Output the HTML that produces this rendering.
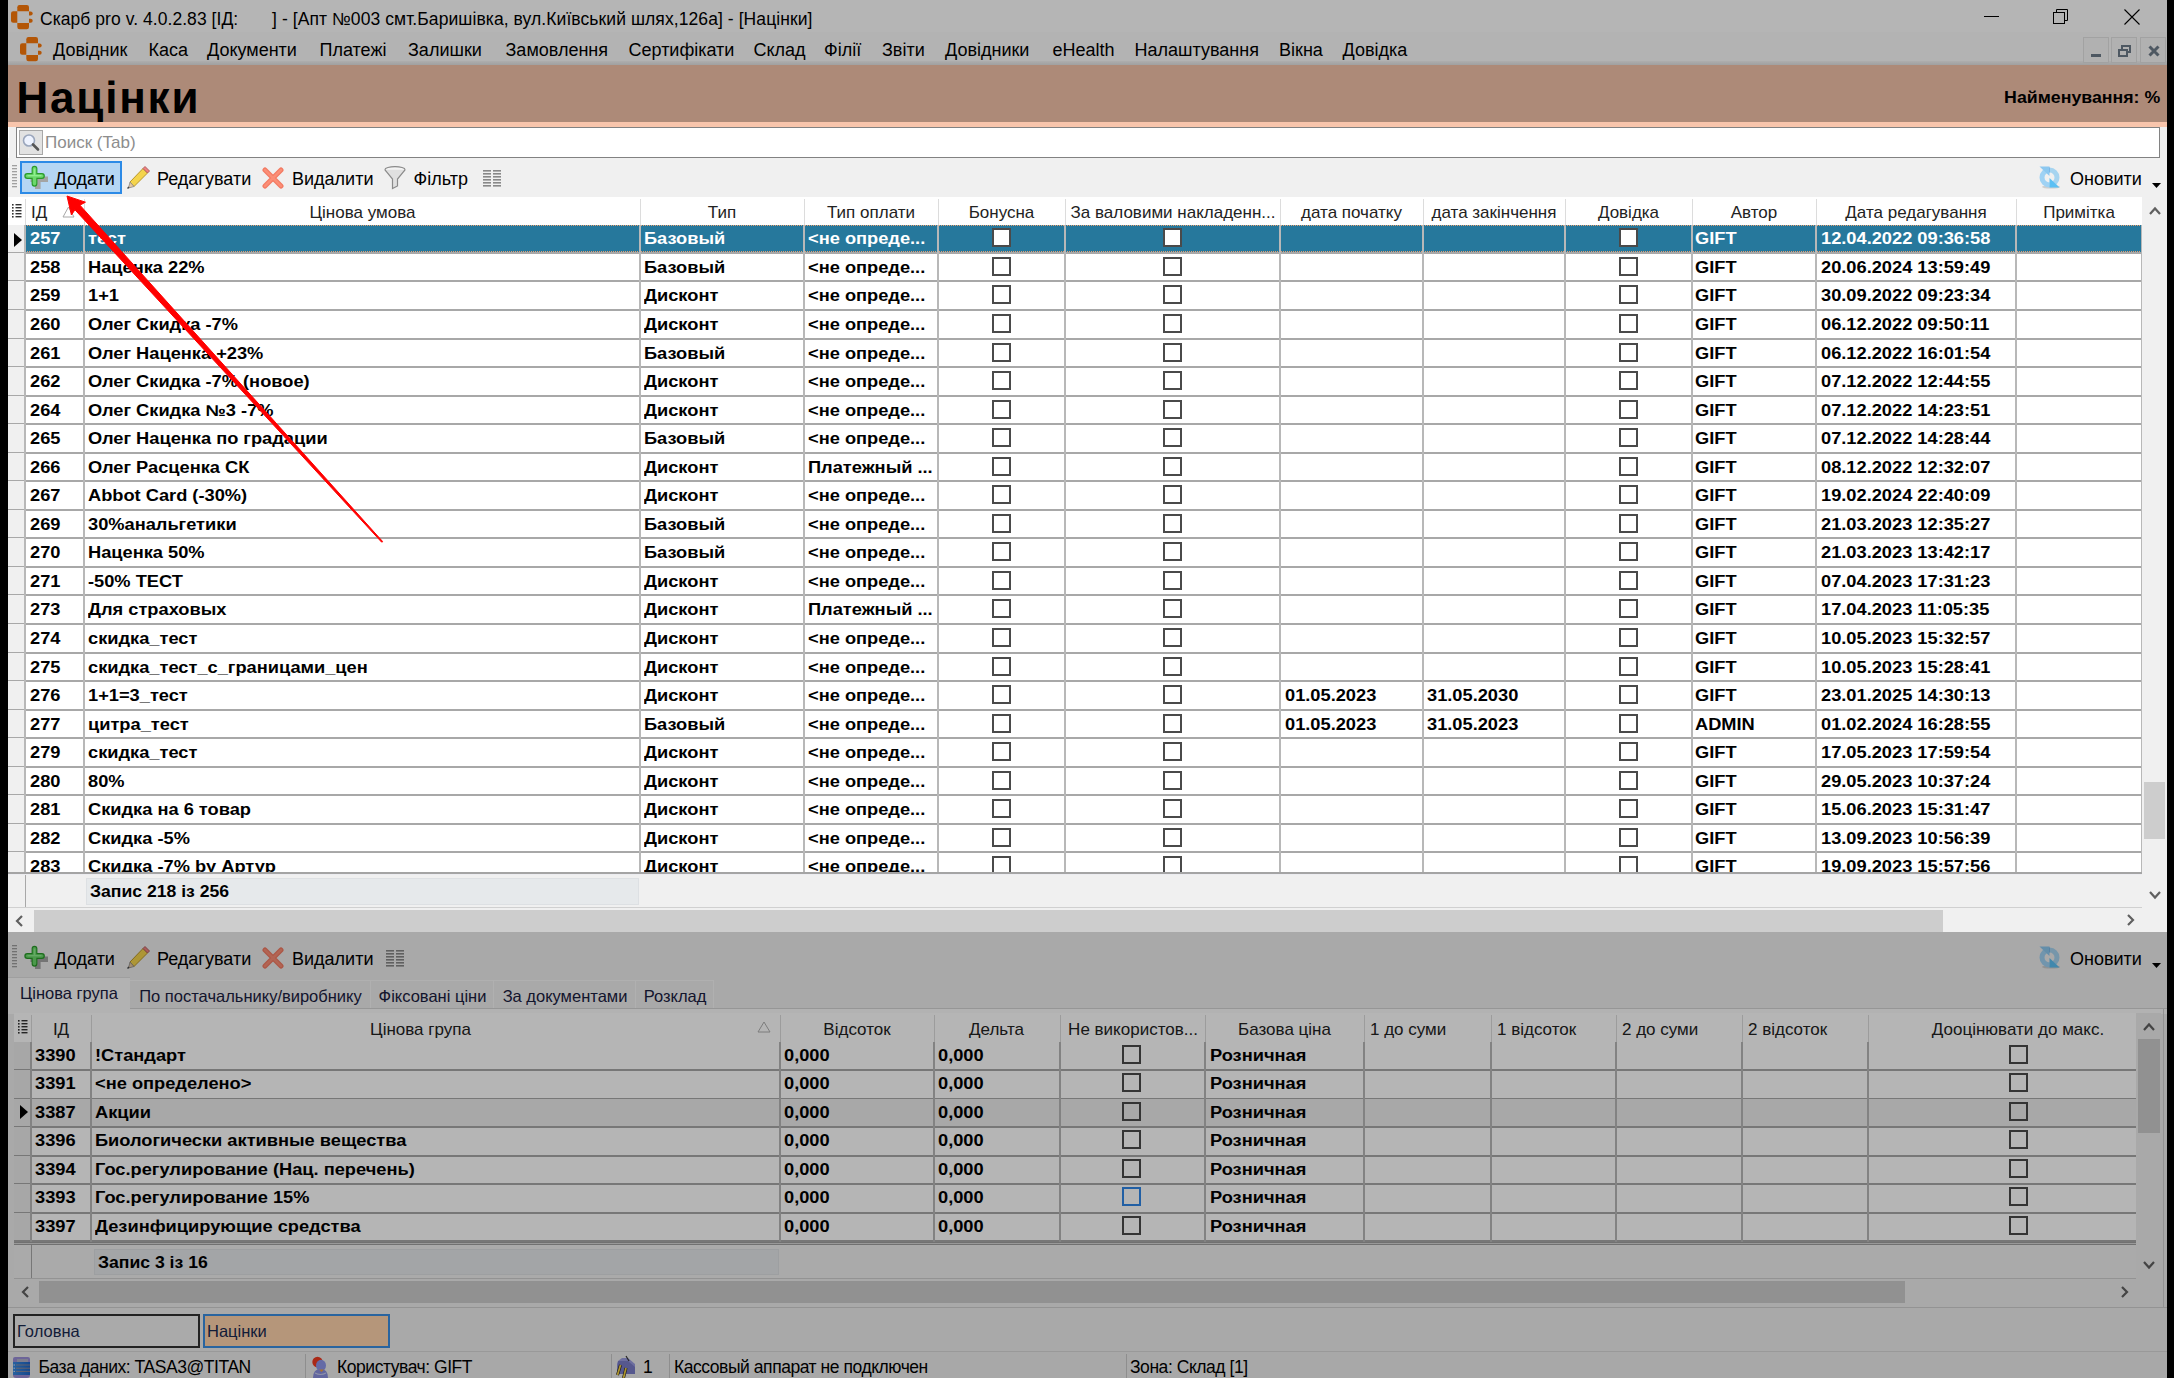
<!DOCTYPE html>
<html><head><meta charset="utf-8"><style>
html,body{margin:0;padding:0;width:2174px;height:1378px;overflow:hidden;background:#000}
body{position:relative;font-family:"Liberation Sans", sans-serif;}
div,svg{font-family:"Liberation Sans", sans-serif;}
</style></head><body>
<div style="position:absolute;left:0px;top:0px;width:2174px;height:1378px;background:#000"></div><div style="position:absolute;left:8px;top:0px;width:2159px;height:1378px;background:#f0f0f0"></div><div style="position:absolute;left:8px;top:0px;width:2159px;height:32px;background:#ffffff"></div><div style="position:absolute;left:8px;top:32px;width:2159px;height:33px;background:#fdfdfd"></div><div style="position:absolute;left:8px;top:61px;width:2159px;height:4px;background:linear-gradient(#f4f4f4,#e2e2e2)"></div><svg style="position:absolute;left:11px;top:5px;" width="22" height="25" viewBox="0 0 22 25"><path d="M6.3 6.2V2.2Q6.3 0 8.5 0H15.8Q18 0 18 2.2V6.2Z" fill="#fd7a0a"/><path d="M6.3 6.2H2.2Q0 6.2 0 8.4V15.5Q0 17.8 2.2 17.8H6.3Z" fill="#fd7a0a"/><path d="M6.3 18V22Q6.3 24.2 8.5 24.2H15.8Q18 24.2 18 22V18Z" fill="#fd7a0a"/><path d="M18 6.4H19.6Q21.7 6.4 21.7 8.5Q21.7 10.5 19.6 10.5H18Z" fill="#fd7a0a"/><path d="M18 13.8H19.6Q21.7 13.8 21.7 15.8Q21.7 17.8 19.6 17.8H18Z" fill="#fd7a0a"/></svg><div style="position:absolute;left:40px;top:10.5px;height:17.5px;line-height:17.5px;font-size:17.5px;font-weight:400;color:#000;letter-spacing:0.05px;text-align:left;white-space:pre;">Скарб pro v. 4.0.2.83 [ІД:</div><div style="position:absolute;left:272px;top:10.5px;height:17.5px;line-height:17.5px;font-size:17.5px;font-weight:400;color:#000;letter-spacing:0.08px;text-align:left;white-space:pre;">] - [Апт №003 смт.Баришівка, вул.Київський шлях,126а] - [Націнки]</div><div style="position:absolute;left:1984px;top:16px;width:15px;height:1px;background:#000"></div><svg style="position:absolute;left:2053px;top:9px;" width="16" height="16" viewBox="0 0 16 16"><rect x="0.5" y="3.5" width="11" height="11" fill="none" stroke="#000"/><path d="M3.5 3.5V0.5H14.5V11.5H11.5" fill="none" stroke="#000"/></svg><svg style="position:absolute;left:2124px;top:9px;" width="16" height="16" viewBox="0 0 16 16"><path d="M0.5 0.5L15.5 15.5M15.5 0.5L0.5 15.5" stroke="#000" stroke-width="1.1"/></svg><svg style="position:absolute;left:19.5px;top:36.5px;" width="22" height="25" viewBox="0 0 22 25"><path d="M6.3 6.2V2.2Q6.3 0 8.5 0H15.8Q18 0 18 2.2V6.2Z" fill="#fd7a0a"/><path d="M6.3 6.2H2.2Q0 6.2 0 8.4V15.5Q0 17.8 2.2 17.8H6.3Z" fill="#fd7a0a"/><path d="M6.3 18V22Q6.3 24.2 8.5 24.2H15.8Q18 24.2 18 22V18Z" fill="#fd7a0a"/><path d="M18 6.4H19.6Q21.7 6.4 21.7 8.5Q21.7 10.5 19.6 10.5H18Z" fill="#fd7a0a"/><path d="M18 13.8H19.6Q21.7 13.8 21.7 15.8Q21.7 17.8 19.6 17.8H18Z" fill="#fd7a0a"/></svg><div style="position:absolute;left:53px;top:41px;height:18px;line-height:18px;font-size:18px;font-weight:400;color:#000;letter-spacing:0px;text-align:left;white-space:pre;">Довідник</div><div style="position:absolute;left:148.5px;top:41px;height:18px;line-height:18px;font-size:18px;font-weight:400;color:#000;letter-spacing:0px;text-align:left;white-space:pre;">Каса</div><div style="position:absolute;left:207px;top:41px;height:18px;line-height:18px;font-size:18px;font-weight:400;color:#000;letter-spacing:0px;text-align:left;white-space:pre;">Документи</div><div style="position:absolute;left:319.5px;top:41px;height:18px;line-height:18px;font-size:18px;font-weight:400;color:#000;letter-spacing:0px;text-align:left;white-space:pre;">Платежі</div><div style="position:absolute;left:408px;top:41px;height:18px;line-height:18px;font-size:18px;font-weight:400;color:#000;letter-spacing:0px;text-align:left;white-space:pre;">Залишки</div><div style="position:absolute;left:505.5px;top:41px;height:18px;line-height:18px;font-size:18px;font-weight:400;color:#000;letter-spacing:0px;text-align:left;white-space:pre;">Замовлення</div><div style="position:absolute;left:628.5px;top:41px;height:18px;line-height:18px;font-size:18px;font-weight:400;color:#000;letter-spacing:0px;text-align:left;white-space:pre;">Сертифікати</div><div style="position:absolute;left:753.5px;top:41px;height:18px;line-height:18px;font-size:18px;font-weight:400;color:#000;letter-spacing:0px;text-align:left;white-space:pre;">Склад</div><div style="position:absolute;left:824px;top:41px;height:18px;line-height:18px;font-size:18px;font-weight:400;color:#000;letter-spacing:0px;text-align:left;white-space:pre;">Філії</div><div style="position:absolute;left:882px;top:41px;height:18px;line-height:18px;font-size:18px;font-weight:400;color:#000;letter-spacing:0px;text-align:left;white-space:pre;">Звіти</div><div style="position:absolute;left:945px;top:41px;height:18px;line-height:18px;font-size:18px;font-weight:400;color:#000;letter-spacing:0px;text-align:left;white-space:pre;">Довідники</div><div style="position:absolute;left:1052.5px;top:41px;height:18px;line-height:18px;font-size:18px;font-weight:400;color:#000;letter-spacing:0px;text-align:left;white-space:pre;">eHealth</div><div style="position:absolute;left:1134.5px;top:41px;height:18px;line-height:18px;font-size:18px;font-weight:400;color:#000;letter-spacing:0px;text-align:left;white-space:pre;">Налаштування</div><div style="position:absolute;left:1279px;top:41px;height:18px;line-height:18px;font-size:18px;font-weight:400;color:#000;letter-spacing:0px;text-align:left;white-space:pre;">Вікна</div><div style="position:absolute;left:1342.5px;top:41px;height:18px;line-height:18px;font-size:18px;font-weight:400;color:#000;letter-spacing:0px;text-align:left;white-space:pre;">Довідка</div><div style="position:absolute;left:2083px;top:37px;width:26px;height:26px;box-sizing:border-box;border:1px solid #e4e4e4;background:#fafafa"></div><div style="position:absolute;left:2111px;top:37px;width:26px;height:26px;box-sizing:border-box;border:1px solid #e4e4e4;background:#fafafa"></div><div style="position:absolute;left:2140px;top:37px;width:26px;height:26px;box-sizing:border-box;border:1px solid #e4e4e4;background:#fafafa"></div><div style="position:absolute;left:2091px;top:54px;width:10px;height:3px;background:#6e7c8a"></div><svg style="position:absolute;left:2118px;top:44px;" width="14" height="14" viewBox="0 0 14 14"><rect x="1" y="6" width="8" height="6" fill="none" stroke="#6e7c8a" stroke-width="2"/><path d="M4 5V2H12V8H10" fill="none" stroke="#6e7c8a" stroke-width="2"/></svg><svg style="position:absolute;left:2148px;top:45px;" width="12" height="12" viewBox="0 0 12 12"><path d="M1.5 1.5L10.5 10.5M10.5 1.5L1.5 10.5" stroke="#6e7c8a" stroke-width="3"/></svg><div style="position:absolute;left:8px;top:65px;width:2159px;height:57px;background:#f4c3aa"></div><div style="position:absolute;left:8px;top:122px;width:2159px;height:5px;background:#f8c5ac"></div><div style="position:absolute;left:16.5px;top:75.5px;height:44px;line-height:44px;font-size:44px;font-weight:700;color:#000;letter-spacing:1.8px;text-align:left;white-space:pre;">Націнки</div><div style="position:absolute;left:1800px;top:89px;width:360px;height:16.5px;line-height:16.5px;font-size:16.5px;font-weight:700;color:#000;letter-spacing:0px;text-align:right;white-space:pre;"><span style="display:inline-block;transform:scaleX(1.075);transform-origin:right">Найменування: %</span></div><div style="position:absolute;left:8px;top:127px;width:2159px;height:31px;background:#f0f0f0"></div><div style="position:absolute;left:8px;top:127px;width:1px;height:805px;background:#ffffff"></div><div style="position:absolute;left:16px;top:127px;width:2144px;height:31px;box-sizing:border-box;border:1px solid #828282;background:#fff"></div><div style="position:absolute;left:19px;top:130px;width:24px;height:25px;box-sizing:border-box;border:1px solid #a8a8a8;background:#e2e2e2"></div><svg style="position:absolute;left:21px;top:133px;" width="20" height="20" viewBox="0 0 20 20"><circle cx="8" cy="7.5" r="5.5" fill="#eef3ff" stroke="#9aa6bc" stroke-width="1.6"/><path d="M12 11.5L17 16.5" stroke="#555" stroke-width="2.6" stroke-linecap="round"/></svg><div style="position:absolute;left:45px;top:134px;height:17px;line-height:17px;font-size:17px;font-weight:400;color:#8d8d8d;letter-spacing:0px;text-align:left;white-space:pre;">Поиск (Tab)</div><div style="position:absolute;left:8px;top:158px;width:2159px;height:39px;background:#f0f0f0"></div><svg style="position:absolute;left:12px;top:165px;" width="5" height="24" viewBox="0 0 5 24"><rect x="0" y="0" width="5" height="1.3" fill="#a0a0a0"/><rect x="0" y="3" width="5" height="1.3" fill="#a0a0a0"/><rect x="0" y="6" width="5" height="1.3" fill="#a0a0a0"/><rect x="0" y="9" width="5" height="1.3" fill="#a0a0a0"/><rect x="0" y="12" width="5" height="1.3" fill="#a0a0a0"/><rect x="0" y="15" width="5" height="1.3" fill="#a0a0a0"/><rect x="0" y="18" width="5" height="1.3" fill="#a0a0a0"/><rect x="0" y="21" width="5" height="1.3" fill="#a0a0a0"/></svg><div style="position:absolute;left:20px;top:161px;width:102px;height:33px;box-sizing:border-box;border:2px solid #2c8ae6;background:#b5d6f4"></div><svg style="position:absolute;left:24px;top:165px;" width="26" height="26" viewBox="0 0 26 26"><path d="M13.8 8V24M6.5 14.3H24" stroke="#a4a4a4" stroke-width="5.6"/><path d="M10.5 3.6V18.8M3.2 11H18" stroke="#2a9a2a" stroke-width="5.8" stroke-linecap="round"/><path d="M10.5 3.8V18.6M3.4 11H17.8" stroke="#6cd86c" stroke-width="3.6" stroke-linecap="round"/><path d="M10.5 4.2V10M4 10.6H17" stroke="#8ef08e" stroke-width="1.4" stroke-linecap="round"/></svg><div style="position:absolute;left:54.5px;top:169.5px;height:18px;line-height:18px;font-size:18px;font-weight:400;color:#000;letter-spacing:0px;text-align:left;white-space:pre;">Додати</div><svg style="position:absolute;left:126px;top:165px;" width="25" height="25" viewBox="0 0 25 25"><path d="M4 17L17 3.5l4.5 4.5L8 21.5z" fill="#f4d44c" stroke="#b9962a" stroke-width="1"/><path d="M17 3.5l2-2 4.5 4.5-2 2z" fill="#f08080" stroke="#b06060" stroke-width="1"/><path d="M4 17l4 4.5-5.5 1.5z" fill="#e8c8a0" stroke="#888" stroke-width="0.8"/><path d="M1.5 23.5l1.5-1.5" stroke="#444" stroke-width="1.5"/></svg><div style="position:absolute;left:157px;top:169.5px;height:18px;line-height:18px;font-size:18px;font-weight:400;color:#000;letter-spacing:0px;text-align:left;white-space:pre;">Редагувати</div><svg style="position:absolute;left:262px;top:167px;" width="22" height="22" viewBox="0 0 22 22"><path d="M3 3L19 19M19 3L3 19" stroke="#f27a62" stroke-width="5" stroke-linecap="round"/><path d="M3 3L19 19M19 3L3 19" stroke="#fb8e76" stroke-width="2.5" stroke-linecap="round"/></svg><div style="position:absolute;left:292px;top:169.5px;height:18px;line-height:18px;font-size:18px;font-weight:400;color:#000;letter-spacing:0px;text-align:left;white-space:pre;">Видалити</div><svg style="position:absolute;left:384px;top:166px;" width="22" height="24" viewBox="0 0 22 24"><ellipse cx="11" cy="3.5" rx="10" ry="2.8" fill="#f4f4f4" stroke="#8a8a8a" stroke-width="1.2"/><path d="M1 3.8L8.5 13V22.5L13.5 20V13L21 3.8" fill="#e0e0e0" stroke="#8a8a8a" stroke-width="1.2"/></svg><div style="position:absolute;left:413.5px;top:169.5px;height:18px;line-height:18px;font-size:18px;font-weight:400;color:#000;letter-spacing:0px;text-align:left;white-space:pre;">Фільтр</div><svg style="position:absolute;left:483px;top:170px;" width="18" height="18" viewBox="0 0 18 18"><rect x="0" y="0" width="8" height="1.6" fill="#888"/><rect x="0" y="3" width="8" height="1.6" fill="#888"/><rect x="0" y="6" width="8" height="1.6" fill="#888"/><rect x="0" y="9" width="8" height="1.6" fill="#888"/><rect x="0" y="12" width="8" height="1.6" fill="#888"/><rect x="0" y="15" width="8" height="1.6" fill="#888"/><rect x="10" y="0" width="8" height="1.6" fill="#888"/><rect x="10" y="3" width="8" height="1.6" fill="#888"/><rect x="10" y="6" width="8" height="1.6" fill="#888"/><rect x="10" y="9" width="8" height="1.6" fill="#888"/><rect x="10" y="12" width="8" height="1.6" fill="#888"/><rect x="10" y="15" width="8" height="1.6" fill="#888"/></svg><svg style="position:absolute;left:2039px;top:166px;" width="23" height="23" viewBox="0 0 23 23"><ellipse cx="12" cy="21" rx="9" ry="1.6" fill="#b8b8b8" opacity="0.6"/><path d="M10.5 1.5A10 10 0 0 0 10.5 21.5V16.5A5 5 0 0 1 10.5 6.5Z" fill="#9fd2f4"/><path d="M0.5 0.5H10.5V10Z" fill="#8cc8f0"/><path d="M10.5 1.5A10 10 0 0 1 10.5 21.5V16.5A5 5 0 0 0 10.5 6.5Z" fill="#a6d4f0"/><path d="M10.5 12V21.5H20.5Z" fill="#5cc0f4"/><path d="M10.5 1.5V6.5" stroke="#7ab8e8" stroke-width="1"/></svg><div style="position:absolute;left:2070px;top:169.5px;height:18px;line-height:18px;font-size:18px;font-weight:400;color:#000;letter-spacing:0px;text-align:left;white-space:pre;">Оновити</div><svg style="position:absolute;left:2152px;top:183px;" width="9" height="6" viewBox="0 0 9 6"><path d="M0 0H9L4.5 5z" fill="#000"/></svg><div style="position:absolute;left:8px;top:197px;width:2134px;height:28px;background:#fff"></div><div style="position:absolute;left:25px;top:199px;width:1px;height:26px;background:#dcdcdc"></div><div style="position:absolute;left:84px;top:199px;width:1px;height:26px;background:#dcdcdc"></div><div style="position:absolute;left:640px;top:199px;width:1px;height:26px;background:#dcdcdc"></div><div style="position:absolute;left:804px;top:199px;width:1px;height:26px;background:#dcdcdc"></div><div style="position:absolute;left:938px;top:199px;width:1px;height:26px;background:#dcdcdc"></div><div style="position:absolute;left:1065px;top:199px;width:1px;height:26px;background:#dcdcdc"></div><div style="position:absolute;left:1280px;top:199px;width:1px;height:26px;background:#dcdcdc"></div><div style="position:absolute;left:1423px;top:199px;width:1px;height:26px;background:#dcdcdc"></div><div style="position:absolute;left:1565px;top:199px;width:1px;height:26px;background:#dcdcdc"></div><div style="position:absolute;left:1692px;top:199px;width:1px;height:26px;background:#dcdcdc"></div><div style="position:absolute;left:1816px;top:199px;width:1px;height:26px;background:#dcdcdc"></div><div style="position:absolute;left:2016px;top:199px;width:1px;height:26px;background:#dcdcdc"></div><svg style="position:absolute;left:12px;top:204px;" width="10" height="15" viewBox="0 0 10 15"><rect x="0" y="0" width="1.6" height="1.6" fill="#333"/><rect x="3.5" y="0" width="6" height="1.4" fill="#333"/><rect x="0" y="3" width="1.6" height="1.6" fill="#333"/><rect x="3.5" y="3" width="6" height="1.4" fill="#333"/><rect x="0" y="6" width="1.6" height="1.6" fill="#333"/><rect x="3.5" y="6" width="6" height="1.4" fill="#333"/><rect x="0" y="9" width="1.6" height="1.6" fill="#333"/><rect x="3.5" y="9" width="6" height="1.4" fill="#333"/><rect x="0" y="12" width="1.6" height="1.6" fill="#333"/><rect x="3.5" y="12" width="6" height="1.4" fill="#333"/></svg><div style="position:absolute;left:31px;top:204px;height:17px;line-height:17px;font-size:17px;font-weight:400;color:#222;letter-spacing:0px;text-align:left;white-space:pre;">ІД</div><svg style="position:absolute;left:62px;top:206px;" width="13" height="12" viewBox="0 0 13 12"><path d="M6.5 1L12 11H1z" fill="#fff" stroke="#a8a8a8" stroke-width="1"/></svg><div style="position:absolute;left:84px;top:204px;width:557px;height:17px;line-height:17px;font-size:17px;font-weight:400;color:#222;letter-spacing:0px;text-align:center;white-space:pre;">Цінова умова</div><div style="position:absolute;left:640px;top:204px;width:164px;height:17px;line-height:17px;font-size:17px;font-weight:400;color:#222;letter-spacing:0px;text-align:center;white-space:pre;">Тип</div><div style="position:absolute;left:804px;top:204px;width:134px;height:17px;line-height:17px;font-size:17px;font-weight:400;color:#222;letter-spacing:0px;text-align:center;white-space:pre;">Тип оплати</div><div style="position:absolute;left:938px;top:204px;width:127px;height:17px;line-height:17px;font-size:17px;font-weight:400;color:#222;letter-spacing:0px;text-align:center;white-space:pre;">Бонусна</div><div style="position:absolute;left:1065px;top:204px;width:216px;height:17px;line-height:17px;font-size:17px;font-weight:400;color:#222;letter-spacing:0px;text-align:center;white-space:pre;">За валовими накладенн...</div><div style="position:absolute;left:1280px;top:204px;width:143px;height:17px;line-height:17px;font-size:17px;font-weight:400;color:#222;letter-spacing:0px;text-align:center;white-space:pre;">дата початку</div><div style="position:absolute;left:1423px;top:204px;width:142px;height:17px;line-height:17px;font-size:17px;font-weight:400;color:#222;letter-spacing:0px;text-align:center;white-space:pre;">дата закінчення</div><div style="position:absolute;left:1565px;top:204px;width:127px;height:17px;line-height:17px;font-size:17px;font-weight:400;color:#222;letter-spacing:0px;text-align:center;white-space:pre;">Довідка</div><div style="position:absolute;left:1692px;top:204px;width:124px;height:17px;line-height:17px;font-size:17px;font-weight:400;color:#222;letter-spacing:0px;text-align:center;white-space:pre;">Автор</div><div style="position:absolute;left:1816px;top:204px;width:200px;height:17px;line-height:17px;font-size:17px;font-weight:400;color:#222;letter-spacing:0px;text-align:center;white-space:pre;">Дата редагування</div><div style="position:absolute;left:2016px;top:204px;width:126px;height:17px;line-height:17px;font-size:17px;font-weight:400;color:#222;letter-spacing:0px;text-align:center;white-space:pre;">Примітка</div><div style="position:absolute;left:8px;top:225px;width:2134px;height:648px;overflow:hidden;background:#fff"><div style="position:absolute;left:0px;top:0px;width:16px;height:27px;background:#f0f0f0"></div><div style="position:absolute;left:17px;top:0px;width:2117px;height:27px;background:#26789c;box-sizing:border-box;border:1.5px dotted #e8a070"></div><div style="position:absolute;left:0px;top:27px;width:2134px;height:1.5px;background:#a8a8a8"></div><div style="position:absolute;left:22px;top:6px;height:16px;line-height:16px;font-size:16px;font-weight:700;color:#fff;letter-spacing:0px;text-align:left;white-space:pre;"><span style="display:inline-block;transform:scaleX(1.14);transform-origin:left">257</span></div><div style="position:absolute;left:80px;top:6px;height:16px;line-height:16px;font-size:16px;font-weight:700;color:#fff;letter-spacing:0px;text-align:left;white-space:pre;"><span style="display:inline-block;transform:scaleX(1.14);transform-origin:left">тест</span></div><div style="position:absolute;left:636px;top:6px;height:16px;line-height:16px;font-size:16px;font-weight:700;color:#fff;letter-spacing:0px;text-align:left;white-space:pre;"><span style="display:inline-block;transform:scaleX(1.14);transform-origin:left">Базовый</span></div><div style="position:absolute;left:800px;top:6px;height:16px;line-height:16px;font-size:16px;font-weight:700;color:#fff;letter-spacing:0px;text-align:left;white-space:pre;"><span style="display:inline-block;transform:scaleX(1.14);transform-origin:left">&lt;не опреде...</span></div><div style="position:absolute;left:984px;top:3px;width:19px;height:19px;box-sizing:border-box;border:2px solid #4a4a4a;background:#fff"></div><div style="position:absolute;left:1155px;top:3px;width:19px;height:19px;box-sizing:border-box;border:2px solid #4a4a4a;background:#fff"></div><div style="position:absolute;left:1611px;top:3px;width:19px;height:19px;box-sizing:border-box;border:2px solid #4a4a4a;background:#fff"></div><div style="position:absolute;left:1687px;top:6px;height:16px;line-height:16px;font-size:16px;font-weight:700;color:#fff;letter-spacing:0px;text-align:left;white-space:pre;"><span style="display:inline-block;transform:scaleX(1.14);transform-origin:left">GIFT</span></div><div style="position:absolute;left:1813px;top:6px;height:16px;line-height:16px;font-size:16px;font-weight:700;color:#fff;letter-spacing:0px;text-align:left;white-space:pre;"><span style="display:inline-block;transform:scaleX(1.14);transform-origin:left">12.04.2022 09:36:58</span></div><svg style="position:absolute;left:6px;top:8px;" width="8" height="14" viewBox="0 0 8 14"><path d="M0 0L8 7L0 14z" fill="#000"/></svg><div style="position:absolute;left:0px;top:28px;width:16px;height:27px;background:#f0f0f0"></div><div style="position:absolute;left:0px;top:55px;width:2134px;height:1.5px;background:#a8a8a8"></div><div style="position:absolute;left:22px;top:35px;height:16px;line-height:16px;font-size:16px;font-weight:700;color:#000;letter-spacing:0px;text-align:left;white-space:pre;"><span style="display:inline-block;transform:scaleX(1.14);transform-origin:left">258</span></div><div style="position:absolute;left:80px;top:35px;height:16px;line-height:16px;font-size:16px;font-weight:700;color:#000;letter-spacing:0px;text-align:left;white-space:pre;"><span style="display:inline-block;transform:scaleX(1.14);transform-origin:left">Наценка 22%</span></div><div style="position:absolute;left:636px;top:35px;height:16px;line-height:16px;font-size:16px;font-weight:700;color:#000;letter-spacing:0px;text-align:left;white-space:pre;"><span style="display:inline-block;transform:scaleX(1.14);transform-origin:left">Базовый</span></div><div style="position:absolute;left:800px;top:35px;height:16px;line-height:16px;font-size:16px;font-weight:700;color:#000;letter-spacing:0px;text-align:left;white-space:pre;"><span style="display:inline-block;transform:scaleX(1.14);transform-origin:left">&lt;не опреде...</span></div><div style="position:absolute;left:984px;top:32px;width:19px;height:19px;box-sizing:border-box;border:2px solid #4a4a4a;background:#fff"></div><div style="position:absolute;left:1155px;top:32px;width:19px;height:19px;box-sizing:border-box;border:2px solid #4a4a4a;background:#fff"></div><div style="position:absolute;left:1611px;top:32px;width:19px;height:19px;box-sizing:border-box;border:2px solid #4a4a4a;background:#fff"></div><div style="position:absolute;left:1687px;top:35px;height:16px;line-height:16px;font-size:16px;font-weight:700;color:#000;letter-spacing:0px;text-align:left;white-space:pre;"><span style="display:inline-block;transform:scaleX(1.14);transform-origin:left">GIFT</span></div><div style="position:absolute;left:1813px;top:35px;height:16px;line-height:16px;font-size:16px;font-weight:700;color:#000;letter-spacing:0px;text-align:left;white-space:pre;"><span style="display:inline-block;transform:scaleX(1.14);transform-origin:left">20.06.2024 13:59:49</span></div><div style="position:absolute;left:0px;top:56px;width:16px;height:28px;background:#f0f0f0"></div><div style="position:absolute;left:0px;top:84px;width:2134px;height:1.5px;background:#a8a8a8"></div><div style="position:absolute;left:22px;top:63px;height:16px;line-height:16px;font-size:16px;font-weight:700;color:#000;letter-spacing:0px;text-align:left;white-space:pre;"><span style="display:inline-block;transform:scaleX(1.14);transform-origin:left">259</span></div><div style="position:absolute;left:80px;top:63px;height:16px;line-height:16px;font-size:16px;font-weight:700;color:#000;letter-spacing:0px;text-align:left;white-space:pre;"><span style="display:inline-block;transform:scaleX(1.14);transform-origin:left">1+1</span></div><div style="position:absolute;left:636px;top:63px;height:16px;line-height:16px;font-size:16px;font-weight:700;color:#000;letter-spacing:0px;text-align:left;white-space:pre;"><span style="display:inline-block;transform:scaleX(1.14);transform-origin:left">Дисконт</span></div><div style="position:absolute;left:800px;top:63px;height:16px;line-height:16px;font-size:16px;font-weight:700;color:#000;letter-spacing:0px;text-align:left;white-space:pre;"><span style="display:inline-block;transform:scaleX(1.14);transform-origin:left">&lt;не опреде...</span></div><div style="position:absolute;left:984px;top:60px;width:19px;height:19px;box-sizing:border-box;border:2px solid #4a4a4a;background:#fff"></div><div style="position:absolute;left:1155px;top:60px;width:19px;height:19px;box-sizing:border-box;border:2px solid #4a4a4a;background:#fff"></div><div style="position:absolute;left:1611px;top:60px;width:19px;height:19px;box-sizing:border-box;border:2px solid #4a4a4a;background:#fff"></div><div style="position:absolute;left:1687px;top:63px;height:16px;line-height:16px;font-size:16px;font-weight:700;color:#000;letter-spacing:0px;text-align:left;white-space:pre;"><span style="display:inline-block;transform:scaleX(1.14);transform-origin:left">GIFT</span></div><div style="position:absolute;left:1813px;top:63px;height:16px;line-height:16px;font-size:16px;font-weight:700;color:#000;letter-spacing:0px;text-align:left;white-space:pre;"><span style="display:inline-block;transform:scaleX(1.14);transform-origin:left">30.09.2022 09:23:34</span></div><div style="position:absolute;left:0px;top:85px;width:16px;height:28px;background:#f0f0f0"></div><div style="position:absolute;left:0px;top:113px;width:2134px;height:1.5px;background:#a8a8a8"></div><div style="position:absolute;left:22px;top:92px;height:16px;line-height:16px;font-size:16px;font-weight:700;color:#000;letter-spacing:0px;text-align:left;white-space:pre;"><span style="display:inline-block;transform:scaleX(1.14);transform-origin:left">260</span></div><div style="position:absolute;left:80px;top:92px;height:16px;line-height:16px;font-size:16px;font-weight:700;color:#000;letter-spacing:0px;text-align:left;white-space:pre;"><span style="display:inline-block;transform:scaleX(1.14);transform-origin:left">Олег Скидка -7%</span></div><div style="position:absolute;left:636px;top:92px;height:16px;line-height:16px;font-size:16px;font-weight:700;color:#000;letter-spacing:0px;text-align:left;white-space:pre;"><span style="display:inline-block;transform:scaleX(1.14);transform-origin:left">Дисконт</span></div><div style="position:absolute;left:800px;top:92px;height:16px;line-height:16px;font-size:16px;font-weight:700;color:#000;letter-spacing:0px;text-align:left;white-space:pre;"><span style="display:inline-block;transform:scaleX(1.14);transform-origin:left">&lt;не опреде...</span></div><div style="position:absolute;left:984px;top:89px;width:19px;height:19px;box-sizing:border-box;border:2px solid #4a4a4a;background:#fff"></div><div style="position:absolute;left:1155px;top:89px;width:19px;height:19px;box-sizing:border-box;border:2px solid #4a4a4a;background:#fff"></div><div style="position:absolute;left:1611px;top:89px;width:19px;height:19px;box-sizing:border-box;border:2px solid #4a4a4a;background:#fff"></div><div style="position:absolute;left:1687px;top:92px;height:16px;line-height:16px;font-size:16px;font-weight:700;color:#000;letter-spacing:0px;text-align:left;white-space:pre;"><span style="display:inline-block;transform:scaleX(1.14);transform-origin:left">GIFT</span></div><div style="position:absolute;left:1813px;top:92px;height:16px;line-height:16px;font-size:16px;font-weight:700;color:#000;letter-spacing:0px;text-align:left;white-space:pre;"><span style="display:inline-block;transform:scaleX(1.14);transform-origin:left">06.12.2022 09:50:11</span></div><div style="position:absolute;left:0px;top:114px;width:16px;height:27px;background:#f0f0f0"></div><div style="position:absolute;left:0px;top:141px;width:2134px;height:1.5px;background:#a8a8a8"></div><div style="position:absolute;left:22px;top:121px;height:16px;line-height:16px;font-size:16px;font-weight:700;color:#000;letter-spacing:0px;text-align:left;white-space:pre;"><span style="display:inline-block;transform:scaleX(1.14);transform-origin:left">261</span></div><div style="position:absolute;left:80px;top:121px;height:16px;line-height:16px;font-size:16px;font-weight:700;color:#000;letter-spacing:0px;text-align:left;white-space:pre;"><span style="display:inline-block;transform:scaleX(1.14);transform-origin:left">Олег Наценка +23%</span></div><div style="position:absolute;left:636px;top:121px;height:16px;line-height:16px;font-size:16px;font-weight:700;color:#000;letter-spacing:0px;text-align:left;white-space:pre;"><span style="display:inline-block;transform:scaleX(1.14);transform-origin:left">Базовый</span></div><div style="position:absolute;left:800px;top:121px;height:16px;line-height:16px;font-size:16px;font-weight:700;color:#000;letter-spacing:0px;text-align:left;white-space:pre;"><span style="display:inline-block;transform:scaleX(1.14);transform-origin:left">&lt;не опреде...</span></div><div style="position:absolute;left:984px;top:118px;width:19px;height:19px;box-sizing:border-box;border:2px solid #4a4a4a;background:#fff"></div><div style="position:absolute;left:1155px;top:118px;width:19px;height:19px;box-sizing:border-box;border:2px solid #4a4a4a;background:#fff"></div><div style="position:absolute;left:1611px;top:118px;width:19px;height:19px;box-sizing:border-box;border:2px solid #4a4a4a;background:#fff"></div><div style="position:absolute;left:1687px;top:121px;height:16px;line-height:16px;font-size:16px;font-weight:700;color:#000;letter-spacing:0px;text-align:left;white-space:pre;"><span style="display:inline-block;transform:scaleX(1.14);transform-origin:left">GIFT</span></div><div style="position:absolute;left:1813px;top:121px;height:16px;line-height:16px;font-size:16px;font-weight:700;color:#000;letter-spacing:0px;text-align:left;white-space:pre;"><span style="display:inline-block;transform:scaleX(1.14);transform-origin:left">06.12.2022 16:01:54</span></div><div style="position:absolute;left:0px;top:142px;width:16px;height:28px;background:#f0f0f0"></div><div style="position:absolute;left:0px;top:170px;width:2134px;height:1.5px;background:#a8a8a8"></div><div style="position:absolute;left:22px;top:149px;height:16px;line-height:16px;font-size:16px;font-weight:700;color:#000;letter-spacing:0px;text-align:left;white-space:pre;"><span style="display:inline-block;transform:scaleX(1.14);transform-origin:left">262</span></div><div style="position:absolute;left:80px;top:149px;height:16px;line-height:16px;font-size:16px;font-weight:700;color:#000;letter-spacing:0px;text-align:left;white-space:pre;"><span style="display:inline-block;transform:scaleX(1.14);transform-origin:left">Олег Скидка -7% (новое)</span></div><div style="position:absolute;left:636px;top:149px;height:16px;line-height:16px;font-size:16px;font-weight:700;color:#000;letter-spacing:0px;text-align:left;white-space:pre;"><span style="display:inline-block;transform:scaleX(1.14);transform-origin:left">Дисконт</span></div><div style="position:absolute;left:800px;top:149px;height:16px;line-height:16px;font-size:16px;font-weight:700;color:#000;letter-spacing:0px;text-align:left;white-space:pre;"><span style="display:inline-block;transform:scaleX(1.14);transform-origin:left">&lt;не опреде...</span></div><div style="position:absolute;left:984px;top:146px;width:19px;height:19px;box-sizing:border-box;border:2px solid #4a4a4a;background:#fff"></div><div style="position:absolute;left:1155px;top:146px;width:19px;height:19px;box-sizing:border-box;border:2px solid #4a4a4a;background:#fff"></div><div style="position:absolute;left:1611px;top:146px;width:19px;height:19px;box-sizing:border-box;border:2px solid #4a4a4a;background:#fff"></div><div style="position:absolute;left:1687px;top:149px;height:16px;line-height:16px;font-size:16px;font-weight:700;color:#000;letter-spacing:0px;text-align:left;white-space:pre;"><span style="display:inline-block;transform:scaleX(1.14);transform-origin:left">GIFT</span></div><div style="position:absolute;left:1813px;top:149px;height:16px;line-height:16px;font-size:16px;font-weight:700;color:#000;letter-spacing:0px;text-align:left;white-space:pre;"><span style="display:inline-block;transform:scaleX(1.14);transform-origin:left">07.12.2022 12:44:55</span></div><div style="position:absolute;left:0px;top:171px;width:16px;height:27px;background:#f0f0f0"></div><div style="position:absolute;left:0px;top:198px;width:2134px;height:1.5px;background:#a8a8a8"></div><div style="position:absolute;left:22px;top:178px;height:16px;line-height:16px;font-size:16px;font-weight:700;color:#000;letter-spacing:0px;text-align:left;white-space:pre;"><span style="display:inline-block;transform:scaleX(1.14);transform-origin:left">264</span></div><div style="position:absolute;left:80px;top:178px;height:16px;line-height:16px;font-size:16px;font-weight:700;color:#000;letter-spacing:0px;text-align:left;white-space:pre;"><span style="display:inline-block;transform:scaleX(1.14);transform-origin:left">Олег Скидка №3 -7%</span></div><div style="position:absolute;left:636px;top:178px;height:16px;line-height:16px;font-size:16px;font-weight:700;color:#000;letter-spacing:0px;text-align:left;white-space:pre;"><span style="display:inline-block;transform:scaleX(1.14);transform-origin:left">Дисконт</span></div><div style="position:absolute;left:800px;top:178px;height:16px;line-height:16px;font-size:16px;font-weight:700;color:#000;letter-spacing:0px;text-align:left;white-space:pre;"><span style="display:inline-block;transform:scaleX(1.14);transform-origin:left">&lt;не опреде...</span></div><div style="position:absolute;left:984px;top:175px;width:19px;height:19px;box-sizing:border-box;border:2px solid #4a4a4a;background:#fff"></div><div style="position:absolute;left:1155px;top:175px;width:19px;height:19px;box-sizing:border-box;border:2px solid #4a4a4a;background:#fff"></div><div style="position:absolute;left:1611px;top:175px;width:19px;height:19px;box-sizing:border-box;border:2px solid #4a4a4a;background:#fff"></div><div style="position:absolute;left:1687px;top:178px;height:16px;line-height:16px;font-size:16px;font-weight:700;color:#000;letter-spacing:0px;text-align:left;white-space:pre;"><span style="display:inline-block;transform:scaleX(1.14);transform-origin:left">GIFT</span></div><div style="position:absolute;left:1813px;top:178px;height:16px;line-height:16px;font-size:16px;font-weight:700;color:#000;letter-spacing:0px;text-align:left;white-space:pre;"><span style="display:inline-block;transform:scaleX(1.14);transform-origin:left">07.12.2022 14:23:51</span></div><div style="position:absolute;left:0px;top:199px;width:16px;height:28px;background:#f0f0f0"></div><div style="position:absolute;left:0px;top:227px;width:2134px;height:1.5px;background:#a8a8a8"></div><div style="position:absolute;left:22px;top:206px;height:16px;line-height:16px;font-size:16px;font-weight:700;color:#000;letter-spacing:0px;text-align:left;white-space:pre;"><span style="display:inline-block;transform:scaleX(1.14);transform-origin:left">265</span></div><div style="position:absolute;left:80px;top:206px;height:16px;line-height:16px;font-size:16px;font-weight:700;color:#000;letter-spacing:0px;text-align:left;white-space:pre;"><span style="display:inline-block;transform:scaleX(1.14);transform-origin:left">Олег Наценка по градации</span></div><div style="position:absolute;left:636px;top:206px;height:16px;line-height:16px;font-size:16px;font-weight:700;color:#000;letter-spacing:0px;text-align:left;white-space:pre;"><span style="display:inline-block;transform:scaleX(1.14);transform-origin:left">Базовый</span></div><div style="position:absolute;left:800px;top:206px;height:16px;line-height:16px;font-size:16px;font-weight:700;color:#000;letter-spacing:0px;text-align:left;white-space:pre;"><span style="display:inline-block;transform:scaleX(1.14);transform-origin:left">&lt;не опреде...</span></div><div style="position:absolute;left:984px;top:203px;width:19px;height:19px;box-sizing:border-box;border:2px solid #4a4a4a;background:#fff"></div><div style="position:absolute;left:1155px;top:203px;width:19px;height:19px;box-sizing:border-box;border:2px solid #4a4a4a;background:#fff"></div><div style="position:absolute;left:1611px;top:203px;width:19px;height:19px;box-sizing:border-box;border:2px solid #4a4a4a;background:#fff"></div><div style="position:absolute;left:1687px;top:206px;height:16px;line-height:16px;font-size:16px;font-weight:700;color:#000;letter-spacing:0px;text-align:left;white-space:pre;"><span style="display:inline-block;transform:scaleX(1.14);transform-origin:left">GIFT</span></div><div style="position:absolute;left:1813px;top:206px;height:16px;line-height:16px;font-size:16px;font-weight:700;color:#000;letter-spacing:0px;text-align:left;white-space:pre;"><span style="display:inline-block;transform:scaleX(1.14);transform-origin:left">07.12.2022 14:28:44</span></div><div style="position:absolute;left:0px;top:228px;width:16px;height:27px;background:#f0f0f0"></div><div style="position:absolute;left:0px;top:255px;width:2134px;height:1.5px;background:#a8a8a8"></div><div style="position:absolute;left:22px;top:235px;height:16px;line-height:16px;font-size:16px;font-weight:700;color:#000;letter-spacing:0px;text-align:left;white-space:pre;"><span style="display:inline-block;transform:scaleX(1.14);transform-origin:left">266</span></div><div style="position:absolute;left:80px;top:235px;height:16px;line-height:16px;font-size:16px;font-weight:700;color:#000;letter-spacing:0px;text-align:left;white-space:pre;"><span style="display:inline-block;transform:scaleX(1.14);transform-origin:left">Олег Расценка СК</span></div><div style="position:absolute;left:636px;top:235px;height:16px;line-height:16px;font-size:16px;font-weight:700;color:#000;letter-spacing:0px;text-align:left;white-space:pre;"><span style="display:inline-block;transform:scaleX(1.14);transform-origin:left">Дисконт</span></div><div style="position:absolute;left:800px;top:235px;height:16px;line-height:16px;font-size:16px;font-weight:700;color:#000;letter-spacing:0px;text-align:left;white-space:pre;"><span style="display:inline-block;transform:scaleX(1.14);transform-origin:left">Платежный ...</span></div><div style="position:absolute;left:984px;top:232px;width:19px;height:19px;box-sizing:border-box;border:2px solid #4a4a4a;background:#fff"></div><div style="position:absolute;left:1155px;top:232px;width:19px;height:19px;box-sizing:border-box;border:2px solid #4a4a4a;background:#fff"></div><div style="position:absolute;left:1611px;top:232px;width:19px;height:19px;box-sizing:border-box;border:2px solid #4a4a4a;background:#fff"></div><div style="position:absolute;left:1687px;top:235px;height:16px;line-height:16px;font-size:16px;font-weight:700;color:#000;letter-spacing:0px;text-align:left;white-space:pre;"><span style="display:inline-block;transform:scaleX(1.14);transform-origin:left">GIFT</span></div><div style="position:absolute;left:1813px;top:235px;height:16px;line-height:16px;font-size:16px;font-weight:700;color:#000;letter-spacing:0px;text-align:left;white-space:pre;"><span style="display:inline-block;transform:scaleX(1.14);transform-origin:left">08.12.2022 12:32:07</span></div><div style="position:absolute;left:0px;top:256px;width:16px;height:28px;background:#f0f0f0"></div><div style="position:absolute;left:0px;top:284px;width:2134px;height:1.5px;background:#a8a8a8"></div><div style="position:absolute;left:22px;top:263px;height:16px;line-height:16px;font-size:16px;font-weight:700;color:#000;letter-spacing:0px;text-align:left;white-space:pre;"><span style="display:inline-block;transform:scaleX(1.14);transform-origin:left">267</span></div><div style="position:absolute;left:80px;top:263px;height:16px;line-height:16px;font-size:16px;font-weight:700;color:#000;letter-spacing:0px;text-align:left;white-space:pre;"><span style="display:inline-block;transform:scaleX(1.14);transform-origin:left">Abbot Card (-30%)</span></div><div style="position:absolute;left:636px;top:263px;height:16px;line-height:16px;font-size:16px;font-weight:700;color:#000;letter-spacing:0px;text-align:left;white-space:pre;"><span style="display:inline-block;transform:scaleX(1.14);transform-origin:left">Дисконт</span></div><div style="position:absolute;left:800px;top:263px;height:16px;line-height:16px;font-size:16px;font-weight:700;color:#000;letter-spacing:0px;text-align:left;white-space:pre;"><span style="display:inline-block;transform:scaleX(1.14);transform-origin:left">&lt;не опреде...</span></div><div style="position:absolute;left:984px;top:260px;width:19px;height:19px;box-sizing:border-box;border:2px solid #4a4a4a;background:#fff"></div><div style="position:absolute;left:1155px;top:260px;width:19px;height:19px;box-sizing:border-box;border:2px solid #4a4a4a;background:#fff"></div><div style="position:absolute;left:1611px;top:260px;width:19px;height:19px;box-sizing:border-box;border:2px solid #4a4a4a;background:#fff"></div><div style="position:absolute;left:1687px;top:263px;height:16px;line-height:16px;font-size:16px;font-weight:700;color:#000;letter-spacing:0px;text-align:left;white-space:pre;"><span style="display:inline-block;transform:scaleX(1.14);transform-origin:left">GIFT</span></div><div style="position:absolute;left:1813px;top:263px;height:16px;line-height:16px;font-size:16px;font-weight:700;color:#000;letter-spacing:0px;text-align:left;white-space:pre;"><span style="display:inline-block;transform:scaleX(1.14);transform-origin:left">19.02.2024 22:40:09</span></div><div style="position:absolute;left:0px;top:285px;width:16px;height:27px;background:#f0f0f0"></div><div style="position:absolute;left:0px;top:312px;width:2134px;height:1.5px;background:#a8a8a8"></div><div style="position:absolute;left:22px;top:292px;height:16px;line-height:16px;font-size:16px;font-weight:700;color:#000;letter-spacing:0px;text-align:left;white-space:pre;"><span style="display:inline-block;transform:scaleX(1.14);transform-origin:left">269</span></div><div style="position:absolute;left:80px;top:292px;height:16px;line-height:16px;font-size:16px;font-weight:700;color:#000;letter-spacing:0px;text-align:left;white-space:pre;"><span style="display:inline-block;transform:scaleX(1.14);transform-origin:left">30%анальгетики</span></div><div style="position:absolute;left:636px;top:292px;height:16px;line-height:16px;font-size:16px;font-weight:700;color:#000;letter-spacing:0px;text-align:left;white-space:pre;"><span style="display:inline-block;transform:scaleX(1.14);transform-origin:left">Базовый</span></div><div style="position:absolute;left:800px;top:292px;height:16px;line-height:16px;font-size:16px;font-weight:700;color:#000;letter-spacing:0px;text-align:left;white-space:pre;"><span style="display:inline-block;transform:scaleX(1.14);transform-origin:left">&lt;не опреде...</span></div><div style="position:absolute;left:984px;top:289px;width:19px;height:19px;box-sizing:border-box;border:2px solid #4a4a4a;background:#fff"></div><div style="position:absolute;left:1155px;top:289px;width:19px;height:19px;box-sizing:border-box;border:2px solid #4a4a4a;background:#fff"></div><div style="position:absolute;left:1611px;top:289px;width:19px;height:19px;box-sizing:border-box;border:2px solid #4a4a4a;background:#fff"></div><div style="position:absolute;left:1687px;top:292px;height:16px;line-height:16px;font-size:16px;font-weight:700;color:#000;letter-spacing:0px;text-align:left;white-space:pre;"><span style="display:inline-block;transform:scaleX(1.14);transform-origin:left">GIFT</span></div><div style="position:absolute;left:1813px;top:292px;height:16px;line-height:16px;font-size:16px;font-weight:700;color:#000;letter-spacing:0px;text-align:left;white-space:pre;"><span style="display:inline-block;transform:scaleX(1.14);transform-origin:left">21.03.2023 12:35:27</span></div><div style="position:absolute;left:0px;top:313px;width:16px;height:28px;background:#f0f0f0"></div><div style="position:absolute;left:0px;top:341px;width:2134px;height:1.5px;background:#a8a8a8"></div><div style="position:absolute;left:22px;top:320px;height:16px;line-height:16px;font-size:16px;font-weight:700;color:#000;letter-spacing:0px;text-align:left;white-space:pre;"><span style="display:inline-block;transform:scaleX(1.14);transform-origin:left">270</span></div><div style="position:absolute;left:80px;top:320px;height:16px;line-height:16px;font-size:16px;font-weight:700;color:#000;letter-spacing:0px;text-align:left;white-space:pre;"><span style="display:inline-block;transform:scaleX(1.14);transform-origin:left">Наценка 50%</span></div><div style="position:absolute;left:636px;top:320px;height:16px;line-height:16px;font-size:16px;font-weight:700;color:#000;letter-spacing:0px;text-align:left;white-space:pre;"><span style="display:inline-block;transform:scaleX(1.14);transform-origin:left">Базовый</span></div><div style="position:absolute;left:800px;top:320px;height:16px;line-height:16px;font-size:16px;font-weight:700;color:#000;letter-spacing:0px;text-align:left;white-space:pre;"><span style="display:inline-block;transform:scaleX(1.14);transform-origin:left">&lt;не опреде...</span></div><div style="position:absolute;left:984px;top:317px;width:19px;height:19px;box-sizing:border-box;border:2px solid #4a4a4a;background:#fff"></div><div style="position:absolute;left:1155px;top:317px;width:19px;height:19px;box-sizing:border-box;border:2px solid #4a4a4a;background:#fff"></div><div style="position:absolute;left:1611px;top:317px;width:19px;height:19px;box-sizing:border-box;border:2px solid #4a4a4a;background:#fff"></div><div style="position:absolute;left:1687px;top:320px;height:16px;line-height:16px;font-size:16px;font-weight:700;color:#000;letter-spacing:0px;text-align:left;white-space:pre;"><span style="display:inline-block;transform:scaleX(1.14);transform-origin:left">GIFT</span></div><div style="position:absolute;left:1813px;top:320px;height:16px;line-height:16px;font-size:16px;font-weight:700;color:#000;letter-spacing:0px;text-align:left;white-space:pre;"><span style="display:inline-block;transform:scaleX(1.14);transform-origin:left">21.03.2023 13:42:17</span></div><div style="position:absolute;left:0px;top:342px;width:16px;height:27px;background:#f0f0f0"></div><div style="position:absolute;left:0px;top:369px;width:2134px;height:1.5px;background:#a8a8a8"></div><div style="position:absolute;left:22px;top:349px;height:16px;line-height:16px;font-size:16px;font-weight:700;color:#000;letter-spacing:0px;text-align:left;white-space:pre;"><span style="display:inline-block;transform:scaleX(1.14);transform-origin:left">271</span></div><div style="position:absolute;left:80px;top:349px;height:16px;line-height:16px;font-size:16px;font-weight:700;color:#000;letter-spacing:0px;text-align:left;white-space:pre;"><span style="display:inline-block;transform:scaleX(1.14);transform-origin:left">-50% ТЕСТ</span></div><div style="position:absolute;left:636px;top:349px;height:16px;line-height:16px;font-size:16px;font-weight:700;color:#000;letter-spacing:0px;text-align:left;white-space:pre;"><span style="display:inline-block;transform:scaleX(1.14);transform-origin:left">Дисконт</span></div><div style="position:absolute;left:800px;top:349px;height:16px;line-height:16px;font-size:16px;font-weight:700;color:#000;letter-spacing:0px;text-align:left;white-space:pre;"><span style="display:inline-block;transform:scaleX(1.14);transform-origin:left">&lt;не опреде...</span></div><div style="position:absolute;left:984px;top:346px;width:19px;height:19px;box-sizing:border-box;border:2px solid #4a4a4a;background:#fff"></div><div style="position:absolute;left:1155px;top:346px;width:19px;height:19px;box-sizing:border-box;border:2px solid #4a4a4a;background:#fff"></div><div style="position:absolute;left:1611px;top:346px;width:19px;height:19px;box-sizing:border-box;border:2px solid #4a4a4a;background:#fff"></div><div style="position:absolute;left:1687px;top:349px;height:16px;line-height:16px;font-size:16px;font-weight:700;color:#000;letter-spacing:0px;text-align:left;white-space:pre;"><span style="display:inline-block;transform:scaleX(1.14);transform-origin:left">GIFT</span></div><div style="position:absolute;left:1813px;top:349px;height:16px;line-height:16px;font-size:16px;font-weight:700;color:#000;letter-spacing:0px;text-align:left;white-space:pre;"><span style="display:inline-block;transform:scaleX(1.14);transform-origin:left">07.04.2023 17:31:23</span></div><div style="position:absolute;left:0px;top:370px;width:16px;height:28px;background:#f0f0f0"></div><div style="position:absolute;left:0px;top:398px;width:2134px;height:1.5px;background:#a8a8a8"></div><div style="position:absolute;left:22px;top:377px;height:16px;line-height:16px;font-size:16px;font-weight:700;color:#000;letter-spacing:0px;text-align:left;white-space:pre;"><span style="display:inline-block;transform:scaleX(1.14);transform-origin:left">273</span></div><div style="position:absolute;left:80px;top:377px;height:16px;line-height:16px;font-size:16px;font-weight:700;color:#000;letter-spacing:0px;text-align:left;white-space:pre;"><span style="display:inline-block;transform:scaleX(1.14);transform-origin:left">Для страховых</span></div><div style="position:absolute;left:636px;top:377px;height:16px;line-height:16px;font-size:16px;font-weight:700;color:#000;letter-spacing:0px;text-align:left;white-space:pre;"><span style="display:inline-block;transform:scaleX(1.14);transform-origin:left">Дисконт</span></div><div style="position:absolute;left:800px;top:377px;height:16px;line-height:16px;font-size:16px;font-weight:700;color:#000;letter-spacing:0px;text-align:left;white-space:pre;"><span style="display:inline-block;transform:scaleX(1.14);transform-origin:left">Платежный ...</span></div><div style="position:absolute;left:984px;top:374px;width:19px;height:19px;box-sizing:border-box;border:2px solid #4a4a4a;background:#fff"></div><div style="position:absolute;left:1155px;top:374px;width:19px;height:19px;box-sizing:border-box;border:2px solid #4a4a4a;background:#fff"></div><div style="position:absolute;left:1611px;top:374px;width:19px;height:19px;box-sizing:border-box;border:2px solid #4a4a4a;background:#fff"></div><div style="position:absolute;left:1687px;top:377px;height:16px;line-height:16px;font-size:16px;font-weight:700;color:#000;letter-spacing:0px;text-align:left;white-space:pre;"><span style="display:inline-block;transform:scaleX(1.14);transform-origin:left">GIFT</span></div><div style="position:absolute;left:1813px;top:377px;height:16px;line-height:16px;font-size:16px;font-weight:700;color:#000;letter-spacing:0px;text-align:left;white-space:pre;"><span style="display:inline-block;transform:scaleX(1.14);transform-origin:left">17.04.2023 11:05:35</span></div><div style="position:absolute;left:0px;top:399px;width:16px;height:28px;background:#f0f0f0"></div><div style="position:absolute;left:0px;top:427px;width:2134px;height:1.5px;background:#a8a8a8"></div><div style="position:absolute;left:22px;top:406px;height:16px;line-height:16px;font-size:16px;font-weight:700;color:#000;letter-spacing:0px;text-align:left;white-space:pre;"><span style="display:inline-block;transform:scaleX(1.14);transform-origin:left">274</span></div><div style="position:absolute;left:80px;top:406px;height:16px;line-height:16px;font-size:16px;font-weight:700;color:#000;letter-spacing:0px;text-align:left;white-space:pre;"><span style="display:inline-block;transform:scaleX(1.14);transform-origin:left">скидка_тест</span></div><div style="position:absolute;left:636px;top:406px;height:16px;line-height:16px;font-size:16px;font-weight:700;color:#000;letter-spacing:0px;text-align:left;white-space:pre;"><span style="display:inline-block;transform:scaleX(1.14);transform-origin:left">Дисконт</span></div><div style="position:absolute;left:800px;top:406px;height:16px;line-height:16px;font-size:16px;font-weight:700;color:#000;letter-spacing:0px;text-align:left;white-space:pre;"><span style="display:inline-block;transform:scaleX(1.14);transform-origin:left">&lt;не опреде...</span></div><div style="position:absolute;left:984px;top:403px;width:19px;height:19px;box-sizing:border-box;border:2px solid #4a4a4a;background:#fff"></div><div style="position:absolute;left:1155px;top:403px;width:19px;height:19px;box-sizing:border-box;border:2px solid #4a4a4a;background:#fff"></div><div style="position:absolute;left:1611px;top:403px;width:19px;height:19px;box-sizing:border-box;border:2px solid #4a4a4a;background:#fff"></div><div style="position:absolute;left:1687px;top:406px;height:16px;line-height:16px;font-size:16px;font-weight:700;color:#000;letter-spacing:0px;text-align:left;white-space:pre;"><span style="display:inline-block;transform:scaleX(1.14);transform-origin:left">GIFT</span></div><div style="position:absolute;left:1813px;top:406px;height:16px;line-height:16px;font-size:16px;font-weight:700;color:#000;letter-spacing:0px;text-align:left;white-space:pre;"><span style="display:inline-block;transform:scaleX(1.14);transform-origin:left">10.05.2023 15:32:57</span></div><div style="position:absolute;left:0px;top:428px;width:16px;height:27px;background:#f0f0f0"></div><div style="position:absolute;left:0px;top:455px;width:2134px;height:1.5px;background:#a8a8a8"></div><div style="position:absolute;left:22px;top:435px;height:16px;line-height:16px;font-size:16px;font-weight:700;color:#000;letter-spacing:0px;text-align:left;white-space:pre;"><span style="display:inline-block;transform:scaleX(1.14);transform-origin:left">275</span></div><div style="position:absolute;left:80px;top:435px;height:16px;line-height:16px;font-size:16px;font-weight:700;color:#000;letter-spacing:0px;text-align:left;white-space:pre;"><span style="display:inline-block;transform:scaleX(1.14);transform-origin:left">скидка_тест_с_границами_цен</span></div><div style="position:absolute;left:636px;top:435px;height:16px;line-height:16px;font-size:16px;font-weight:700;color:#000;letter-spacing:0px;text-align:left;white-space:pre;"><span style="display:inline-block;transform:scaleX(1.14);transform-origin:left">Дисконт</span></div><div style="position:absolute;left:800px;top:435px;height:16px;line-height:16px;font-size:16px;font-weight:700;color:#000;letter-spacing:0px;text-align:left;white-space:pre;"><span style="display:inline-block;transform:scaleX(1.14);transform-origin:left">&lt;не опреде...</span></div><div style="position:absolute;left:984px;top:432px;width:19px;height:19px;box-sizing:border-box;border:2px solid #4a4a4a;background:#fff"></div><div style="position:absolute;left:1155px;top:432px;width:19px;height:19px;box-sizing:border-box;border:2px solid #4a4a4a;background:#fff"></div><div style="position:absolute;left:1611px;top:432px;width:19px;height:19px;box-sizing:border-box;border:2px solid #4a4a4a;background:#fff"></div><div style="position:absolute;left:1687px;top:435px;height:16px;line-height:16px;font-size:16px;font-weight:700;color:#000;letter-spacing:0px;text-align:left;white-space:pre;"><span style="display:inline-block;transform:scaleX(1.14);transform-origin:left">GIFT</span></div><div style="position:absolute;left:1813px;top:435px;height:16px;line-height:16px;font-size:16px;font-weight:700;color:#000;letter-spacing:0px;text-align:left;white-space:pre;"><span style="display:inline-block;transform:scaleX(1.14);transform-origin:left">10.05.2023 15:28:41</span></div><div style="position:absolute;left:0px;top:456px;width:16px;height:28px;background:#f0f0f0"></div><div style="position:absolute;left:0px;top:484px;width:2134px;height:1.5px;background:#a8a8a8"></div><div style="position:absolute;left:22px;top:463px;height:16px;line-height:16px;font-size:16px;font-weight:700;color:#000;letter-spacing:0px;text-align:left;white-space:pre;"><span style="display:inline-block;transform:scaleX(1.14);transform-origin:left">276</span></div><div style="position:absolute;left:80px;top:463px;height:16px;line-height:16px;font-size:16px;font-weight:700;color:#000;letter-spacing:0px;text-align:left;white-space:pre;"><span style="display:inline-block;transform:scaleX(1.14);transform-origin:left">1+1=3_тест</span></div><div style="position:absolute;left:636px;top:463px;height:16px;line-height:16px;font-size:16px;font-weight:700;color:#000;letter-spacing:0px;text-align:left;white-space:pre;"><span style="display:inline-block;transform:scaleX(1.14);transform-origin:left">Дисконт</span></div><div style="position:absolute;left:800px;top:463px;height:16px;line-height:16px;font-size:16px;font-weight:700;color:#000;letter-spacing:0px;text-align:left;white-space:pre;"><span style="display:inline-block;transform:scaleX(1.14);transform-origin:left">&lt;не опреде...</span></div><div style="position:absolute;left:984px;top:460px;width:19px;height:19px;box-sizing:border-box;border:2px solid #4a4a4a;background:#fff"></div><div style="position:absolute;left:1155px;top:460px;width:19px;height:19px;box-sizing:border-box;border:2px solid #4a4a4a;background:#fff"></div><div style="position:absolute;left:1277px;top:463px;height:16px;line-height:16px;font-size:16px;font-weight:700;color:#000;letter-spacing:0px;text-align:left;white-space:pre;"><span style="display:inline-block;transform:scaleX(1.14);transform-origin:left">01.05.2023</span></div><div style="position:absolute;left:1419px;top:463px;height:16px;line-height:16px;font-size:16px;font-weight:700;color:#000;letter-spacing:0px;text-align:left;white-space:pre;"><span style="display:inline-block;transform:scaleX(1.14);transform-origin:left">31.05.2030</span></div><div style="position:absolute;left:1611px;top:460px;width:19px;height:19px;box-sizing:border-box;border:2px solid #4a4a4a;background:#fff"></div><div style="position:absolute;left:1687px;top:463px;height:16px;line-height:16px;font-size:16px;font-weight:700;color:#000;letter-spacing:0px;text-align:left;white-space:pre;"><span style="display:inline-block;transform:scaleX(1.14);transform-origin:left">GIFT</span></div><div style="position:absolute;left:1813px;top:463px;height:16px;line-height:16px;font-size:16px;font-weight:700;color:#000;letter-spacing:0px;text-align:left;white-space:pre;"><span style="display:inline-block;transform:scaleX(1.14);transform-origin:left">23.01.2025 14:30:13</span></div><div style="position:absolute;left:0px;top:485px;width:16px;height:27px;background:#f0f0f0"></div><div style="position:absolute;left:0px;top:512px;width:2134px;height:1.5px;background:#a8a8a8"></div><div style="position:absolute;left:22px;top:492px;height:16px;line-height:16px;font-size:16px;font-weight:700;color:#000;letter-spacing:0px;text-align:left;white-space:pre;"><span style="display:inline-block;transform:scaleX(1.14);transform-origin:left">277</span></div><div style="position:absolute;left:80px;top:492px;height:16px;line-height:16px;font-size:16px;font-weight:700;color:#000;letter-spacing:0px;text-align:left;white-space:pre;"><span style="display:inline-block;transform:scaleX(1.14);transform-origin:left">цитра_тест</span></div><div style="position:absolute;left:636px;top:492px;height:16px;line-height:16px;font-size:16px;font-weight:700;color:#000;letter-spacing:0px;text-align:left;white-space:pre;"><span style="display:inline-block;transform:scaleX(1.14);transform-origin:left">Базовый</span></div><div style="position:absolute;left:800px;top:492px;height:16px;line-height:16px;font-size:16px;font-weight:700;color:#000;letter-spacing:0px;text-align:left;white-space:pre;"><span style="display:inline-block;transform:scaleX(1.14);transform-origin:left">&lt;не опреде...</span></div><div style="position:absolute;left:984px;top:489px;width:19px;height:19px;box-sizing:border-box;border:2px solid #4a4a4a;background:#fff"></div><div style="position:absolute;left:1155px;top:489px;width:19px;height:19px;box-sizing:border-box;border:2px solid #4a4a4a;background:#fff"></div><div style="position:absolute;left:1277px;top:492px;height:16px;line-height:16px;font-size:16px;font-weight:700;color:#000;letter-spacing:0px;text-align:left;white-space:pre;"><span style="display:inline-block;transform:scaleX(1.14);transform-origin:left">01.05.2023</span></div><div style="position:absolute;left:1419px;top:492px;height:16px;line-height:16px;font-size:16px;font-weight:700;color:#000;letter-spacing:0px;text-align:left;white-space:pre;"><span style="display:inline-block;transform:scaleX(1.14);transform-origin:left">31.05.2023</span></div><div style="position:absolute;left:1611px;top:489px;width:19px;height:19px;box-sizing:border-box;border:2px solid #4a4a4a;background:#fff"></div><div style="position:absolute;left:1687px;top:492px;height:16px;line-height:16px;font-size:16px;font-weight:700;color:#000;letter-spacing:0px;text-align:left;white-space:pre;"><span style="display:inline-block;transform:scaleX(1.14);transform-origin:left">ADMIN</span></div><div style="position:absolute;left:1813px;top:492px;height:16px;line-height:16px;font-size:16px;font-weight:700;color:#000;letter-spacing:0px;text-align:left;white-space:pre;"><span style="display:inline-block;transform:scaleX(1.14);transform-origin:left">01.02.2024 16:28:55</span></div><div style="position:absolute;left:0px;top:513px;width:16px;height:28px;background:#f0f0f0"></div><div style="position:absolute;left:0px;top:541px;width:2134px;height:1.5px;background:#a8a8a8"></div><div style="position:absolute;left:22px;top:520px;height:16px;line-height:16px;font-size:16px;font-weight:700;color:#000;letter-spacing:0px;text-align:left;white-space:pre;"><span style="display:inline-block;transform:scaleX(1.14);transform-origin:left">279</span></div><div style="position:absolute;left:80px;top:520px;height:16px;line-height:16px;font-size:16px;font-weight:700;color:#000;letter-spacing:0px;text-align:left;white-space:pre;"><span style="display:inline-block;transform:scaleX(1.14);transform-origin:left">скидка_тест</span></div><div style="position:absolute;left:636px;top:520px;height:16px;line-height:16px;font-size:16px;font-weight:700;color:#000;letter-spacing:0px;text-align:left;white-space:pre;"><span style="display:inline-block;transform:scaleX(1.14);transform-origin:left">Дисконт</span></div><div style="position:absolute;left:800px;top:520px;height:16px;line-height:16px;font-size:16px;font-weight:700;color:#000;letter-spacing:0px;text-align:left;white-space:pre;"><span style="display:inline-block;transform:scaleX(1.14);transform-origin:left">&lt;не опреде...</span></div><div style="position:absolute;left:984px;top:517px;width:19px;height:19px;box-sizing:border-box;border:2px solid #4a4a4a;background:#fff"></div><div style="position:absolute;left:1155px;top:517px;width:19px;height:19px;box-sizing:border-box;border:2px solid #4a4a4a;background:#fff"></div><div style="position:absolute;left:1611px;top:517px;width:19px;height:19px;box-sizing:border-box;border:2px solid #4a4a4a;background:#fff"></div><div style="position:absolute;left:1687px;top:520px;height:16px;line-height:16px;font-size:16px;font-weight:700;color:#000;letter-spacing:0px;text-align:left;white-space:pre;"><span style="display:inline-block;transform:scaleX(1.14);transform-origin:left">GIFT</span></div><div style="position:absolute;left:1813px;top:520px;height:16px;line-height:16px;font-size:16px;font-weight:700;color:#000;letter-spacing:0px;text-align:left;white-space:pre;"><span style="display:inline-block;transform:scaleX(1.14);transform-origin:left">17.05.2023 17:59:54</span></div><div style="position:absolute;left:0px;top:542px;width:16px;height:27px;background:#f0f0f0"></div><div style="position:absolute;left:0px;top:569px;width:2134px;height:1.5px;background:#a8a8a8"></div><div style="position:absolute;left:22px;top:549px;height:16px;line-height:16px;font-size:16px;font-weight:700;color:#000;letter-spacing:0px;text-align:left;white-space:pre;"><span style="display:inline-block;transform:scaleX(1.14);transform-origin:left">280</span></div><div style="position:absolute;left:80px;top:549px;height:16px;line-height:16px;font-size:16px;font-weight:700;color:#000;letter-spacing:0px;text-align:left;white-space:pre;"><span style="display:inline-block;transform:scaleX(1.14);transform-origin:left">80%</span></div><div style="position:absolute;left:636px;top:549px;height:16px;line-height:16px;font-size:16px;font-weight:700;color:#000;letter-spacing:0px;text-align:left;white-space:pre;"><span style="display:inline-block;transform:scaleX(1.14);transform-origin:left">Дисконт</span></div><div style="position:absolute;left:800px;top:549px;height:16px;line-height:16px;font-size:16px;font-weight:700;color:#000;letter-spacing:0px;text-align:left;white-space:pre;"><span style="display:inline-block;transform:scaleX(1.14);transform-origin:left">&lt;не опреде...</span></div><div style="position:absolute;left:984px;top:546px;width:19px;height:19px;box-sizing:border-box;border:2px solid #4a4a4a;background:#fff"></div><div style="position:absolute;left:1155px;top:546px;width:19px;height:19px;box-sizing:border-box;border:2px solid #4a4a4a;background:#fff"></div><div style="position:absolute;left:1611px;top:546px;width:19px;height:19px;box-sizing:border-box;border:2px solid #4a4a4a;background:#fff"></div><div style="position:absolute;left:1687px;top:549px;height:16px;line-height:16px;font-size:16px;font-weight:700;color:#000;letter-spacing:0px;text-align:left;white-space:pre;"><span style="display:inline-block;transform:scaleX(1.14);transform-origin:left">GIFT</span></div><div style="position:absolute;left:1813px;top:549px;height:16px;line-height:16px;font-size:16px;font-weight:700;color:#000;letter-spacing:0px;text-align:left;white-space:pre;"><span style="display:inline-block;transform:scaleX(1.14);transform-origin:left">29.05.2023 10:37:24</span></div><div style="position:absolute;left:0px;top:570px;width:16px;height:28px;background:#f0f0f0"></div><div style="position:absolute;left:0px;top:598px;width:2134px;height:1.5px;background:#a8a8a8"></div><div style="position:absolute;left:22px;top:577px;height:16px;line-height:16px;font-size:16px;font-weight:700;color:#000;letter-spacing:0px;text-align:left;white-space:pre;"><span style="display:inline-block;transform:scaleX(1.14);transform-origin:left">281</span></div><div style="position:absolute;left:80px;top:577px;height:16px;line-height:16px;font-size:16px;font-weight:700;color:#000;letter-spacing:0px;text-align:left;white-space:pre;"><span style="display:inline-block;transform:scaleX(1.14);transform-origin:left">Скидка на 6 товар</span></div><div style="position:absolute;left:636px;top:577px;height:16px;line-height:16px;font-size:16px;font-weight:700;color:#000;letter-spacing:0px;text-align:left;white-space:pre;"><span style="display:inline-block;transform:scaleX(1.14);transform-origin:left">Дисконт</span></div><div style="position:absolute;left:800px;top:577px;height:16px;line-height:16px;font-size:16px;font-weight:700;color:#000;letter-spacing:0px;text-align:left;white-space:pre;"><span style="display:inline-block;transform:scaleX(1.14);transform-origin:left">&lt;не опреде...</span></div><div style="position:absolute;left:984px;top:574px;width:19px;height:19px;box-sizing:border-box;border:2px solid #4a4a4a;background:#fff"></div><div style="position:absolute;left:1155px;top:574px;width:19px;height:19px;box-sizing:border-box;border:2px solid #4a4a4a;background:#fff"></div><div style="position:absolute;left:1611px;top:574px;width:19px;height:19px;box-sizing:border-box;border:2px solid #4a4a4a;background:#fff"></div><div style="position:absolute;left:1687px;top:577px;height:16px;line-height:16px;font-size:16px;font-weight:700;color:#000;letter-spacing:0px;text-align:left;white-space:pre;"><span style="display:inline-block;transform:scaleX(1.14);transform-origin:left">GIFT</span></div><div style="position:absolute;left:1813px;top:577px;height:16px;line-height:16px;font-size:16px;font-weight:700;color:#000;letter-spacing:0px;text-align:left;white-space:pre;"><span style="display:inline-block;transform:scaleX(1.14);transform-origin:left">15.06.2023 15:31:47</span></div><div style="position:absolute;left:0px;top:599px;width:16px;height:27px;background:#f0f0f0"></div><div style="position:absolute;left:0px;top:626px;width:2134px;height:1.5px;background:#a8a8a8"></div><div style="position:absolute;left:22px;top:606px;height:16px;line-height:16px;font-size:16px;font-weight:700;color:#000;letter-spacing:0px;text-align:left;white-space:pre;"><span style="display:inline-block;transform:scaleX(1.14);transform-origin:left">282</span></div><div style="position:absolute;left:80px;top:606px;height:16px;line-height:16px;font-size:16px;font-weight:700;color:#000;letter-spacing:0px;text-align:left;white-space:pre;"><span style="display:inline-block;transform:scaleX(1.14);transform-origin:left">Скидка -5%</span></div><div style="position:absolute;left:636px;top:606px;height:16px;line-height:16px;font-size:16px;font-weight:700;color:#000;letter-spacing:0px;text-align:left;white-space:pre;"><span style="display:inline-block;transform:scaleX(1.14);transform-origin:left">Дисконт</span></div><div style="position:absolute;left:800px;top:606px;height:16px;line-height:16px;font-size:16px;font-weight:700;color:#000;letter-spacing:0px;text-align:left;white-space:pre;"><span style="display:inline-block;transform:scaleX(1.14);transform-origin:left">&lt;не опреде...</span></div><div style="position:absolute;left:984px;top:603px;width:19px;height:19px;box-sizing:border-box;border:2px solid #4a4a4a;background:#fff"></div><div style="position:absolute;left:1155px;top:603px;width:19px;height:19px;box-sizing:border-box;border:2px solid #4a4a4a;background:#fff"></div><div style="position:absolute;left:1611px;top:603px;width:19px;height:19px;box-sizing:border-box;border:2px solid #4a4a4a;background:#fff"></div><div style="position:absolute;left:1687px;top:606px;height:16px;line-height:16px;font-size:16px;font-weight:700;color:#000;letter-spacing:0px;text-align:left;white-space:pre;"><span style="display:inline-block;transform:scaleX(1.14);transform-origin:left">GIFT</span></div><div style="position:absolute;left:1813px;top:606px;height:16px;line-height:16px;font-size:16px;font-weight:700;color:#000;letter-spacing:0px;text-align:left;white-space:pre;"><span style="display:inline-block;transform:scaleX(1.14);transform-origin:left">13.09.2023 10:56:39</span></div><div style="position:absolute;left:0px;top:627px;width:16px;height:28px;background:#f0f0f0"></div><div style="position:absolute;left:0px;top:655px;width:2134px;height:1.5px;background:#a8a8a8"></div><div style="position:absolute;left:22px;top:634px;height:16px;line-height:16px;font-size:16px;font-weight:700;color:#000;letter-spacing:0px;text-align:left;white-space:pre;"><span style="display:inline-block;transform:scaleX(1.14);transform-origin:left">283</span></div><div style="position:absolute;left:80px;top:634px;height:16px;line-height:16px;font-size:16px;font-weight:700;color:#000;letter-spacing:0px;text-align:left;white-space:pre;"><span style="display:inline-block;transform:scaleX(1.14);transform-origin:left">Скидка -7% by Артур</span></div><div style="position:absolute;left:636px;top:634px;height:16px;line-height:16px;font-size:16px;font-weight:700;color:#000;letter-spacing:0px;text-align:left;white-space:pre;"><span style="display:inline-block;transform:scaleX(1.14);transform-origin:left">Дисконт</span></div><div style="position:absolute;left:800px;top:634px;height:16px;line-height:16px;font-size:16px;font-weight:700;color:#000;letter-spacing:0px;text-align:left;white-space:pre;"><span style="display:inline-block;transform:scaleX(1.14);transform-origin:left">&lt;не опреде...</span></div><div style="position:absolute;left:984px;top:631px;width:19px;height:19px;box-sizing:border-box;border:2px solid #4a4a4a;background:#fff"></div><div style="position:absolute;left:1155px;top:631px;width:19px;height:19px;box-sizing:border-box;border:2px solid #4a4a4a;background:#fff"></div><div style="position:absolute;left:1611px;top:631px;width:19px;height:19px;box-sizing:border-box;border:2px solid #4a4a4a;background:#fff"></div><div style="position:absolute;left:1687px;top:634px;height:16px;line-height:16px;font-size:16px;font-weight:700;color:#000;letter-spacing:0px;text-align:left;white-space:pre;"><span style="display:inline-block;transform:scaleX(1.14);transform-origin:left">GIFT</span></div><div style="position:absolute;left:1813px;top:634px;height:16px;line-height:16px;font-size:16px;font-weight:700;color:#000;letter-spacing:0px;text-align:left;white-space:pre;"><span style="display:inline-block;transform:scaleX(1.14);transform-origin:left">19.09.2023 15:57:56</span></div><div style="position:absolute;left:16px;top:0px;width:2px;height:648px;background:#b8b8b8"></div><div style="position:absolute;left:75px;top:0px;width:2px;height:648px;background:#b8b8b8"></div><div style="position:absolute;left:631px;top:0px;width:2px;height:648px;background:#b8b8b8"></div><div style="position:absolute;left:795px;top:0px;width:2px;height:648px;background:#b8b8b8"></div><div style="position:absolute;left:929px;top:0px;width:2px;height:648px;background:#b8b8b8"></div><div style="position:absolute;left:1056px;top:0px;width:2px;height:648px;background:#b8b8b8"></div><div style="position:absolute;left:1271px;top:0px;width:2px;height:648px;background:#b8b8b8"></div><div style="position:absolute;left:1414px;top:0px;width:2px;height:648px;background:#b8b8b8"></div><div style="position:absolute;left:1556px;top:0px;width:2px;height:648px;background:#b8b8b8"></div><div style="position:absolute;left:1683px;top:0px;width:2px;height:648px;background:#b8b8b8"></div><div style="position:absolute;left:1807px;top:0px;width:2px;height:648px;background:#b8b8b8"></div><div style="position:absolute;left:2007px;top:0px;width:2px;height:648px;background:#b8b8b8"></div><div style="position:absolute;left:2133px;top:0px;width:2px;height:648px;background:#b8b8b8"></div></div><div style="position:absolute;left:8px;top:872px;width:2134px;height:2px;background:#a4a4a4"></div><div style="position:absolute;left:8px;top:874px;width:2134px;height:1px;background:#ececf0"></div><div style="position:absolute;left:8px;top:875px;width:2134px;height:32px;background:#f0f0f0"></div><div style="position:absolute;left:25px;top:875px;width:1px;height:32px;background:#a8a8a8"></div><div style="position:absolute;left:86px;top:878px;width:553px;height:27px;box-sizing:border-box;border:1px solid #dde0e3;background:#e6e9eb"></div><div style="position:absolute;left:90px;top:884px;height:16px;line-height:16px;font-size:16px;font-weight:700;color:#000;letter-spacing:0px;text-align:left;white-space:pre;"><span style="display:inline-block;transform:scaleX(1.1);transform-origin:left">Запис 218 із 256</span></div><div style="position:absolute;left:8px;top:907px;width:2134px;height:1px;background:#d0d0d0"></div><div style="position:absolute;left:2142px;top:197px;width:25px;height:711px;background:#f0f0f0"></div><svg style="position:absolute;left:2149px;top:206px;" width="12" height="9" viewBox="0 0 12 9"><path d="M1 8L6 2.5L11 8" fill="none" stroke="#606060" stroke-width="2.2"/></svg><div style="position:absolute;left:2144px;top:782px;width:21px;height:57px;background:#cdcdcd"></div><svg style="position:absolute;left:2149px;top:891px;" width="12" height="9" viewBox="0 0 12 9"><path d="M1 1L6 6.5L11 1" fill="none" stroke="#606060" stroke-width="2.2"/></svg><div style="position:absolute;left:8px;top:908px;width:2159px;height:24px;background:#f0f0f0"></div><svg style="position:absolute;left:15px;top:915px;" width="9" height="12" viewBox="0 0 9 12"><path d="M7 1L2 6L7 11" fill="none" stroke="#606060" stroke-width="2.2"/></svg><div style="position:absolute;left:34px;top:910px;width:1909px;height:22px;background:#cdcdcd"></div><svg style="position:absolute;left:2126px;top:914px;" width="9" height="12" viewBox="0 0 9 12"><path d="M2 1L7 6L2 11" fill="none" stroke="#606060" stroke-width="2.2"/></svg><svg style="position:absolute;left:0px;top:0px;pointer-events:none" width="2174" height="1378" viewBox="0 0 2174 1378"><path d="M67.00 196.00 L85.47 202.17 L79.95 205.17 L382.44 541.30 L382.34 542.07 L381.56 542.10 L74.93 209.75 L71.43 214.96 Z" fill="#ff0000" stroke="#ff0000" stroke-width="1" stroke-linejoin="round"/></svg><div style="position:absolute;left:8px;top:932px;width:2159px;height:376px;background:#eeeeee"></div><svg style="position:absolute;left:12px;top:945px;" width="5" height="24" viewBox="0 0 5 24"><rect x="0" y="0" width="5" height="1.3" fill="#a0a0a0"/><rect x="0" y="3" width="5" height="1.3" fill="#a0a0a0"/><rect x="0" y="6" width="5" height="1.3" fill="#a0a0a0"/><rect x="0" y="9" width="5" height="1.3" fill="#a0a0a0"/><rect x="0" y="12" width="5" height="1.3" fill="#a0a0a0"/><rect x="0" y="15" width="5" height="1.3" fill="#a0a0a0"/><rect x="0" y="18" width="5" height="1.3" fill="#a0a0a0"/><rect x="0" y="21" width="5" height="1.3" fill="#a0a0a0"/></svg><svg style="position:absolute;left:24px;top:945px;" width="26" height="26" viewBox="0 0 26 26"><path d="M13.8 8V24M6.5 14.3H24" stroke="#a4a4a4" stroke-width="5.6"/><path d="M10.5 3.6V18.8M3.2 11H18" stroke="#2a9a2a" stroke-width="5.8" stroke-linecap="round"/><path d="M10.5 3.8V18.6M3.4 11H17.8" stroke="#6cd86c" stroke-width="3.6" stroke-linecap="round"/><path d="M10.5 4.2V10M4 10.6H17" stroke="#8ef08e" stroke-width="1.4" stroke-linecap="round"/></svg><div style="position:absolute;left:54.5px;top:949.5px;height:18px;line-height:18px;font-size:18px;font-weight:400;color:#000;letter-spacing:0px;text-align:left;white-space:pre;">Додати</div><svg style="position:absolute;left:126px;top:945px;" width="25" height="25" viewBox="0 0 25 25"><path d="M4 17L17 3.5l4.5 4.5L8 21.5z" fill="#f4d44c" stroke="#b9962a" stroke-width="1"/><path d="M17 3.5l2-2 4.5 4.5-2 2z" fill="#f08080" stroke="#b06060" stroke-width="1"/><path d="M4 17l4 4.5-5.5 1.5z" fill="#e8c8a0" stroke="#888" stroke-width="0.8"/><path d="M1.5 23.5l1.5-1.5" stroke="#444" stroke-width="1.5"/></svg><div style="position:absolute;left:157px;top:949.5px;height:18px;line-height:18px;font-size:18px;font-weight:400;color:#000;letter-spacing:0px;text-align:left;white-space:pre;">Редагувати</div><svg style="position:absolute;left:262px;top:947px;" width="22" height="22" viewBox="0 0 22 22"><path d="M3 3L19 19M19 3L3 19" stroke="#f27a62" stroke-width="5" stroke-linecap="round"/><path d="M3 3L19 19M19 3L3 19" stroke="#fb8e76" stroke-width="2.5" stroke-linecap="round"/></svg><div style="position:absolute;left:292px;top:949.5px;height:18px;line-height:18px;font-size:18px;font-weight:400;color:#000;letter-spacing:0px;text-align:left;white-space:pre;">Видалити</div><svg style="position:absolute;left:386px;top:950px;" width="18" height="18" viewBox="0 0 18 18"><rect x="0" y="0" width="8" height="1.6" fill="#888"/><rect x="0" y="3" width="8" height="1.6" fill="#888"/><rect x="0" y="6" width="8" height="1.6" fill="#888"/><rect x="0" y="9" width="8" height="1.6" fill="#888"/><rect x="0" y="12" width="8" height="1.6" fill="#888"/><rect x="0" y="15" width="8" height="1.6" fill="#888"/><rect x="10" y="0" width="8" height="1.6" fill="#888"/><rect x="10" y="3" width="8" height="1.6" fill="#888"/><rect x="10" y="6" width="8" height="1.6" fill="#888"/><rect x="10" y="9" width="8" height="1.6" fill="#888"/><rect x="10" y="12" width="8" height="1.6" fill="#888"/><rect x="10" y="15" width="8" height="1.6" fill="#888"/></svg><svg style="position:absolute;left:2039px;top:946px;" width="23" height="23" viewBox="0 0 23 23"><ellipse cx="12" cy="21" rx="9" ry="1.6" fill="#b8b8b8" opacity="0.6"/><path d="M10.5 1.5A10 10 0 0 0 10.5 21.5V16.5A5 5 0 0 1 10.5 6.5Z" fill="#9fd2f4"/><path d="M0.5 0.5H10.5V10Z" fill="#8cc8f0"/><path d="M10.5 1.5A10 10 0 0 1 10.5 21.5V16.5A5 5 0 0 0 10.5 6.5Z" fill="#a6d4f0"/><path d="M10.5 12V21.5H20.5Z" fill="#5cc0f4"/><path d="M10.5 1.5V6.5" stroke="#7ab8e8" stroke-width="1"/></svg><div style="position:absolute;left:2070px;top:949.5px;height:18px;line-height:18px;font-size:18px;font-weight:400;color:#000;letter-spacing:0px;text-align:left;white-space:pre;">Оновити</div><svg style="position:absolute;left:2152px;top:963px;" width="9" height="6" viewBox="0 0 9 6"><path d="M0 0H9L4.5 5z" fill="#000"/></svg><div style="position:absolute;left:8px;top:1008px;width:2159px;height:1px;background:#d4d4d4"></div><div style="position:absolute;left:8px;top:1009px;width:2159px;height:5px;background:#fbfbfb"></div><div style="position:absolute;left:8px;top:977px;width:122px;height:32px;background:#fbfbfb"></div><div style="position:absolute;left:8px;top:977px;width:122px;height:1px;background:#e0e0e0"></div><div style="position:absolute;left:8px;top:984.5px;width:122px;height:16.5px;line-height:16.5px;font-size:16.5px;font-weight:400;color:#1a2040;letter-spacing:0px;text-align:center;white-space:pre;">Цінова група</div><div style="position:absolute;left:130px;top:980px;width:241px;height:28px;background:#eeeeee;box-sizing:border-box;border:1px solid #f8f8f8;border-left:none;border-bottom:none"></div><div style="position:absolute;left:130px;top:987.5px;width:241px;height:16.5px;line-height:16.5px;font-size:16.5px;font-weight:400;color:#1a2040;letter-spacing:0px;text-align:center;white-space:pre;">По постачальнику/виробнику</div><div style="position:absolute;left:371px;top:980px;width:123px;height:28px;background:#eeeeee;box-sizing:border-box;border:1px solid #f8f8f8;border-left:none;border-bottom:none"></div><div style="position:absolute;left:371px;top:987.5px;width:123px;height:16.5px;line-height:16.5px;font-size:16.5px;font-weight:400;color:#1a2040;letter-spacing:0px;text-align:center;white-space:pre;">Фіксовані ціни</div><div style="position:absolute;left:494px;top:980px;width:142px;height:28px;background:#eeeeee;box-sizing:border-box;border:1px solid #f8f8f8;border-left:none;border-bottom:none"></div><div style="position:absolute;left:494px;top:987.5px;width:142px;height:16.5px;line-height:16.5px;font-size:16.5px;font-weight:400;color:#1a2040;letter-spacing:0px;text-align:center;white-space:pre;">За документами</div><div style="position:absolute;left:636px;top:980px;width:78px;height:28px;background:#eeeeee;box-sizing:border-box;border:1px solid #f8f8f8;border-left:none;border-bottom:none"></div><div style="position:absolute;left:636px;top:987.5px;width:78px;height:16.5px;line-height:16.5px;font-size:16.5px;font-weight:400;color:#1a2040;letter-spacing:0px;text-align:center;white-space:pre;">Розклад</div><div style="position:absolute;left:14px;top:1013px;width:2122px;height:29px;background:#fff"></div><div style="position:absolute;left:31px;top:1015px;width:1px;height:27px;background:#dcdcdc"></div><div style="position:absolute;left:91px;top:1015px;width:1px;height:27px;background:#dcdcdc"></div><div style="position:absolute;left:780px;top:1015px;width:1px;height:27px;background:#dcdcdc"></div><div style="position:absolute;left:934px;top:1015px;width:1px;height:27px;background:#dcdcdc"></div><div style="position:absolute;left:1060px;top:1015px;width:1px;height:27px;background:#dcdcdc"></div><div style="position:absolute;left:1205px;top:1015px;width:1px;height:27px;background:#dcdcdc"></div><div style="position:absolute;left:1364px;top:1015px;width:1px;height:27px;background:#dcdcdc"></div><div style="position:absolute;left:1491px;top:1015px;width:1px;height:27px;background:#dcdcdc"></div><div style="position:absolute;left:1616px;top:1015px;width:1px;height:27px;background:#dcdcdc"></div><div style="position:absolute;left:1742px;top:1015px;width:1px;height:27px;background:#dcdcdc"></div><div style="position:absolute;left:1868px;top:1015px;width:1px;height:27px;background:#dcdcdc"></div><svg style="position:absolute;left:18px;top:1020px;" width="10" height="15" viewBox="0 0 10 15"><rect x="0" y="0" width="1.6" height="1.6" fill="#333"/><rect x="3.5" y="0" width="6" height="1.4" fill="#333"/><rect x="0" y="3" width="1.6" height="1.6" fill="#333"/><rect x="3.5" y="3" width="6" height="1.4" fill="#333"/><rect x="0" y="6" width="1.6" height="1.6" fill="#333"/><rect x="3.5" y="6" width="6" height="1.4" fill="#333"/><rect x="0" y="9" width="1.6" height="1.6" fill="#333"/><rect x="3.5" y="9" width="6" height="1.4" fill="#333"/><rect x="0" y="12" width="1.6" height="1.6" fill="#333"/><rect x="3.5" y="12" width="6" height="1.4" fill="#333"/></svg><div style="position:absolute;left:31px;top:1021px;width:60px;height:17px;line-height:17px;font-size:17px;font-weight:400;color:#222;letter-spacing:0px;text-align:center;white-space:pre;">ІД</div><div style="position:absolute;left:91px;top:1021px;width:659px;height:17px;line-height:17px;font-size:17px;font-weight:400;color:#222;letter-spacing:0px;text-align:center;white-space:pre;">Цінова група</div><div style="position:absolute;left:780px;top:1021px;width:154px;height:17px;line-height:17px;font-size:17px;font-weight:400;color:#222;letter-spacing:0px;text-align:center;white-space:pre;">Відсоток</div><div style="position:absolute;left:934px;top:1021px;width:125px;height:17px;line-height:17px;font-size:17px;font-weight:400;color:#222;letter-spacing:0px;text-align:center;white-space:pre;">Дельта</div><div style="position:absolute;left:1060px;top:1021px;width:146px;height:17px;line-height:17px;font-size:17px;font-weight:400;color:#222;letter-spacing:0px;text-align:center;white-space:pre;">Не використов...</div><div style="position:absolute;left:1205px;top:1021px;width:159px;height:17px;line-height:17px;font-size:17px;font-weight:400;color:#222;letter-spacing:0px;text-align:center;white-space:pre;">Базова ціна</div><div style="position:absolute;left:1370px;top:1021px;height:17px;line-height:17px;font-size:17px;font-weight:400;color:#222;letter-spacing:0px;text-align:left;white-space:pre;">1 до суми</div><div style="position:absolute;left:1497px;top:1021px;height:17px;line-height:17px;font-size:17px;font-weight:400;color:#222;letter-spacing:0px;text-align:left;white-space:pre;">1 відсоток</div><div style="position:absolute;left:1622px;top:1021px;height:17px;line-height:17px;font-size:17px;font-weight:400;color:#222;letter-spacing:0px;text-align:left;white-space:pre;">2 до суми</div><div style="position:absolute;left:1748px;top:1021px;height:17px;line-height:17px;font-size:17px;font-weight:400;color:#222;letter-spacing:0px;text-align:left;white-space:pre;">2 відсоток</div><div style="position:absolute;left:1868px;top:1021px;width:300px;height:17px;line-height:17px;font-size:17px;font-weight:400;color:#222;letter-spacing:0px;text-align:center;white-space:pre;">Дооцінювати до макс.</div><svg style="position:absolute;left:757px;top:1021px;" width="14" height="12" viewBox="0 0 14 12"><path d="M7 1L13 11H1z" fill="#fff" stroke="#b0b0b0" stroke-width="1"/></svg><div style="position:absolute;left:14px;top:1042px;width:2122px;height:201px;overflow:hidden;background:#fff"><div style="position:absolute;left:0px;top:0px;width:17px;height:27px;background:#ebebeb"></div><div style="position:absolute;left:0px;top:27px;width:2122px;height:1.5px;background:#a8a8a8"></div><div style="position:absolute;left:21px;top:6px;height:16px;line-height:16px;font-size:16px;font-weight:700;color:#000;letter-spacing:0px;text-align:left;white-space:pre;"><span style="display:inline-block;transform:scaleX(1.14);transform-origin:left">3390</span></div><div style="position:absolute;left:81px;top:6px;height:16px;line-height:16px;font-size:16px;font-weight:700;color:#000;letter-spacing:0px;text-align:left;white-space:pre;"><span style="display:inline-block;transform:scaleX(1.14);transform-origin:left">!Стандарт</span></div><div style="position:absolute;left:770px;top:6px;height:16px;line-height:16px;font-size:16px;font-weight:700;color:#000;letter-spacing:0px;text-align:left;white-space:pre;"><span style="display:inline-block;transform:scaleX(1.14);transform-origin:left">0,000</span></div><div style="position:absolute;left:924px;top:6px;height:16px;line-height:16px;font-size:16px;font-weight:700;color:#000;letter-spacing:0px;text-align:left;white-space:pre;"><span style="display:inline-block;transform:scaleX(1.14);transform-origin:left">0,000</span></div><div style="position:absolute;left:1108px;top:3px;width:19px;height:19px;box-sizing:border-box;border:2px solid #4a4a4a;background:transparent"></div><div style="position:absolute;left:1196px;top:6px;height:16px;line-height:16px;font-size:16px;font-weight:700;color:#000;letter-spacing:0px;text-align:left;white-space:pre;"><span style="display:inline-block;transform:scaleX(1.14);transform-origin:left">Розничная</span></div><div style="position:absolute;left:1995px;top:3px;width:19px;height:19px;box-sizing:border-box;border:2px solid #4a4a4a;background:transparent"></div><div style="position:absolute;left:0px;top:28px;width:17px;height:28px;background:#ebebeb"></div><div style="position:absolute;left:0px;top:56px;width:2122px;height:1.5px;background:#a8a8a8"></div><div style="position:absolute;left:21px;top:34px;height:16px;line-height:16px;font-size:16px;font-weight:700;color:#000;letter-spacing:0px;text-align:left;white-space:pre;"><span style="display:inline-block;transform:scaleX(1.14);transform-origin:left">3391</span></div><div style="position:absolute;left:81px;top:34px;height:16px;line-height:16px;font-size:16px;font-weight:700;color:#000;letter-spacing:0px;text-align:left;white-space:pre;"><span style="display:inline-block;transform:scaleX(1.14);transform-origin:left">&lt;не определено&gt;</span></div><div style="position:absolute;left:770px;top:34px;height:16px;line-height:16px;font-size:16px;font-weight:700;color:#000;letter-spacing:0px;text-align:left;white-space:pre;"><span style="display:inline-block;transform:scaleX(1.14);transform-origin:left">0,000</span></div><div style="position:absolute;left:924px;top:34px;height:16px;line-height:16px;font-size:16px;font-weight:700;color:#000;letter-spacing:0px;text-align:left;white-space:pre;"><span style="display:inline-block;transform:scaleX(1.14);transform-origin:left">0,000</span></div><div style="position:absolute;left:1108px;top:31px;width:19px;height:19px;box-sizing:border-box;border:2px solid #4a4a4a;background:transparent"></div><div style="position:absolute;left:1196px;top:34px;height:16px;line-height:16px;font-size:16px;font-weight:700;color:#000;letter-spacing:0px;text-align:left;white-space:pre;"><span style="display:inline-block;transform:scaleX(1.14);transform-origin:left">Розничная</span></div><div style="position:absolute;left:1995px;top:31px;width:19px;height:19px;box-sizing:border-box;border:2px solid #4a4a4a;background:transparent"></div><div style="position:absolute;left:0px;top:57px;width:17px;height:27px;background:#ebebeb"></div><div style="position:absolute;left:17px;top:57px;width:2105px;height:27px;background:#ededed"></div><svg style="position:absolute;left:6px;top:63px;" width="8" height="14" viewBox="0 0 8 14"><path d="M0 0L8 7L0 14z" fill="#000"/></svg><div style="position:absolute;left:0px;top:84px;width:2122px;height:1.5px;background:#a8a8a8"></div><div style="position:absolute;left:21px;top:63px;height:16px;line-height:16px;font-size:16px;font-weight:700;color:#000;letter-spacing:0px;text-align:left;white-space:pre;"><span style="display:inline-block;transform:scaleX(1.14);transform-origin:left">3387</span></div><div style="position:absolute;left:81px;top:63px;height:16px;line-height:16px;font-size:16px;font-weight:700;color:#000;letter-spacing:0px;text-align:left;white-space:pre;"><span style="display:inline-block;transform:scaleX(1.14);transform-origin:left">Акции</span></div><div style="position:absolute;left:770px;top:63px;height:16px;line-height:16px;font-size:16px;font-weight:700;color:#000;letter-spacing:0px;text-align:left;white-space:pre;"><span style="display:inline-block;transform:scaleX(1.14);transform-origin:left">0,000</span></div><div style="position:absolute;left:924px;top:63px;height:16px;line-height:16px;font-size:16px;font-weight:700;color:#000;letter-spacing:0px;text-align:left;white-space:pre;"><span style="display:inline-block;transform:scaleX(1.14);transform-origin:left">0,000</span></div><div style="position:absolute;left:1108px;top:60px;width:19px;height:19px;box-sizing:border-box;border:2px solid #4a4a4a;background:transparent"></div><div style="position:absolute;left:1196px;top:63px;height:16px;line-height:16px;font-size:16px;font-weight:700;color:#000;letter-spacing:0px;text-align:left;white-space:pre;"><span style="display:inline-block;transform:scaleX(1.14);transform-origin:left">Розничная</span></div><div style="position:absolute;left:1995px;top:60px;width:19px;height:19px;box-sizing:border-box;border:2px solid #4a4a4a;background:transparent"></div><div style="position:absolute;left:0px;top:85px;width:17px;height:28px;background:#ebebeb"></div><div style="position:absolute;left:0px;top:113px;width:2122px;height:1.5px;background:#a8a8a8"></div><div style="position:absolute;left:21px;top:91px;height:16px;line-height:16px;font-size:16px;font-weight:700;color:#000;letter-spacing:0px;text-align:left;white-space:pre;"><span style="display:inline-block;transform:scaleX(1.14);transform-origin:left">3396</span></div><div style="position:absolute;left:81px;top:91px;height:16px;line-height:16px;font-size:16px;font-weight:700;color:#000;letter-spacing:0px;text-align:left;white-space:pre;"><span style="display:inline-block;transform:scaleX(1.14);transform-origin:left">Биологически активные вещества</span></div><div style="position:absolute;left:770px;top:91px;height:16px;line-height:16px;font-size:16px;font-weight:700;color:#000;letter-spacing:0px;text-align:left;white-space:pre;"><span style="display:inline-block;transform:scaleX(1.14);transform-origin:left">0,000</span></div><div style="position:absolute;left:924px;top:91px;height:16px;line-height:16px;font-size:16px;font-weight:700;color:#000;letter-spacing:0px;text-align:left;white-space:pre;"><span style="display:inline-block;transform:scaleX(1.14);transform-origin:left">0,000</span></div><div style="position:absolute;left:1108px;top:88px;width:19px;height:19px;box-sizing:border-box;border:2px solid #4a4a4a;background:transparent"></div><div style="position:absolute;left:1196px;top:91px;height:16px;line-height:16px;font-size:16px;font-weight:700;color:#000;letter-spacing:0px;text-align:left;white-space:pre;"><span style="display:inline-block;transform:scaleX(1.14);transform-origin:left">Розничная</span></div><div style="position:absolute;left:1995px;top:88px;width:19px;height:19px;box-sizing:border-box;border:2px solid #4a4a4a;background:transparent"></div><div style="position:absolute;left:0px;top:114px;width:17px;height:27px;background:#ebebeb"></div><div style="position:absolute;left:0px;top:141px;width:2122px;height:1.5px;background:#a8a8a8"></div><div style="position:absolute;left:21px;top:120px;height:16px;line-height:16px;font-size:16px;font-weight:700;color:#000;letter-spacing:0px;text-align:left;white-space:pre;"><span style="display:inline-block;transform:scaleX(1.14);transform-origin:left">3394</span></div><div style="position:absolute;left:81px;top:120px;height:16px;line-height:16px;font-size:16px;font-weight:700;color:#000;letter-spacing:0px;text-align:left;white-space:pre;"><span style="display:inline-block;transform:scaleX(1.14);transform-origin:left">Гос.регулирование (Нац. перечень)</span></div><div style="position:absolute;left:770px;top:120px;height:16px;line-height:16px;font-size:16px;font-weight:700;color:#000;letter-spacing:0px;text-align:left;white-space:pre;"><span style="display:inline-block;transform:scaleX(1.14);transform-origin:left">0,000</span></div><div style="position:absolute;left:924px;top:120px;height:16px;line-height:16px;font-size:16px;font-weight:700;color:#000;letter-spacing:0px;text-align:left;white-space:pre;"><span style="display:inline-block;transform:scaleX(1.14);transform-origin:left">0,000</span></div><div style="position:absolute;left:1108px;top:117px;width:19px;height:19px;box-sizing:border-box;border:2px solid #4a4a4a;background:transparent"></div><div style="position:absolute;left:1196px;top:120px;height:16px;line-height:16px;font-size:16px;font-weight:700;color:#000;letter-spacing:0px;text-align:left;white-space:pre;"><span style="display:inline-block;transform:scaleX(1.14);transform-origin:left">Розничная</span></div><div style="position:absolute;left:1995px;top:117px;width:19px;height:19px;box-sizing:border-box;border:2px solid #4a4a4a;background:transparent"></div><div style="position:absolute;left:0px;top:142px;width:17px;height:28px;background:#ebebeb"></div><div style="position:absolute;left:0px;top:170px;width:2122px;height:1.5px;background:#a8a8a8"></div><div style="position:absolute;left:21px;top:148px;height:16px;line-height:16px;font-size:16px;font-weight:700;color:#000;letter-spacing:0px;text-align:left;white-space:pre;"><span style="display:inline-block;transform:scaleX(1.14);transform-origin:left">3393</span></div><div style="position:absolute;left:81px;top:148px;height:16px;line-height:16px;font-size:16px;font-weight:700;color:#000;letter-spacing:0px;text-align:left;white-space:pre;"><span style="display:inline-block;transform:scaleX(1.14);transform-origin:left">Гос.регулирование 15%</span></div><div style="position:absolute;left:770px;top:148px;height:16px;line-height:16px;font-size:16px;font-weight:700;color:#000;letter-spacing:0px;text-align:left;white-space:pre;"><span style="display:inline-block;transform:scaleX(1.14);transform-origin:left">0,000</span></div><div style="position:absolute;left:924px;top:148px;height:16px;line-height:16px;font-size:16px;font-weight:700;color:#000;letter-spacing:0px;text-align:left;white-space:pre;"><span style="display:inline-block;transform:scaleX(1.14);transform-origin:left">0,000</span></div><div style="position:absolute;left:1108px;top:145px;width:19px;height:19px;box-sizing:border-box;border:2px solid #2f86e8;background:transparent"></div><div style="position:absolute;left:1196px;top:148px;height:16px;line-height:16px;font-size:16px;font-weight:700;color:#000;letter-spacing:0px;text-align:left;white-space:pre;"><span style="display:inline-block;transform:scaleX(1.14);transform-origin:left">Розничная</span></div><div style="position:absolute;left:1995px;top:145px;width:19px;height:19px;box-sizing:border-box;border:2px solid #4a4a4a;background:transparent"></div><div style="position:absolute;left:0px;top:171px;width:17px;height:27px;background:#ebebeb"></div><div style="position:absolute;left:0px;top:198px;width:2122px;height:1.5px;background:#a8a8a8"></div><div style="position:absolute;left:21px;top:177px;height:16px;line-height:16px;font-size:16px;font-weight:700;color:#000;letter-spacing:0px;text-align:left;white-space:pre;"><span style="display:inline-block;transform:scaleX(1.14);transform-origin:left">3397</span></div><div style="position:absolute;left:81px;top:177px;height:16px;line-height:16px;font-size:16px;font-weight:700;color:#000;letter-spacing:0px;text-align:left;white-space:pre;"><span style="display:inline-block;transform:scaleX(1.14);transform-origin:left">Дезинфицирующие средства</span></div><div style="position:absolute;left:770px;top:177px;height:16px;line-height:16px;font-size:16px;font-weight:700;color:#000;letter-spacing:0px;text-align:left;white-space:pre;"><span style="display:inline-block;transform:scaleX(1.14);transform-origin:left">0,000</span></div><div style="position:absolute;left:924px;top:177px;height:16px;line-height:16px;font-size:16px;font-weight:700;color:#000;letter-spacing:0px;text-align:left;white-space:pre;"><span style="display:inline-block;transform:scaleX(1.14);transform-origin:left">0,000</span></div><div style="position:absolute;left:1108px;top:174px;width:19px;height:19px;box-sizing:border-box;border:2px solid #4a4a4a;background:transparent"></div><div style="position:absolute;left:1196px;top:177px;height:16px;line-height:16px;font-size:16px;font-weight:700;color:#000;letter-spacing:0px;text-align:left;white-space:pre;"><span style="display:inline-block;transform:scaleX(1.14);transform-origin:left">Розничная</span></div><div style="position:absolute;left:1995px;top:174px;width:19px;height:19px;box-sizing:border-box;border:2px solid #4a4a4a;background:transparent"></div><div style="position:absolute;left:16px;top:0px;width:2px;height:201px;background:#b8b8b8"></div><div style="position:absolute;left:76px;top:0px;width:2px;height:201px;background:#b8b8b8"></div><div style="position:absolute;left:765px;top:0px;width:2px;height:201px;background:#b8b8b8"></div><div style="position:absolute;left:919px;top:0px;width:2px;height:201px;background:#b8b8b8"></div><div style="position:absolute;left:1045px;top:0px;width:2px;height:201px;background:#b8b8b8"></div><div style="position:absolute;left:1190px;top:0px;width:2px;height:201px;background:#b8b8b8"></div><div style="position:absolute;left:1349px;top:0px;width:2px;height:201px;background:#b8b8b8"></div><div style="position:absolute;left:1476px;top:0px;width:2px;height:201px;background:#b8b8b8"></div><div style="position:absolute;left:1601px;top:0px;width:2px;height:201px;background:#b8b8b8"></div><div style="position:absolute;left:1727px;top:0px;width:2px;height:201px;background:#b8b8b8"></div><div style="position:absolute;left:1853px;top:0px;width:2px;height:201px;background:#b8b8b8"></div></div><div style="position:absolute;left:14px;top:1242px;width:2122px;height:1px;background:#a0a0a0"></div><div style="position:absolute;left:14px;top:1244px;width:2122px;height:1px;background:#a0a0a0"></div><div style="position:absolute;left:14px;top:1243px;width:2122px;height:1px;background:#d8d8d8"></div><div style="position:absolute;left:14px;top:1245px;width:2122px;height:33px;background:#f0f0f0"></div><div style="position:absolute;left:31px;top:1245px;width:1px;height:33px;background:#a8a8a8"></div><div style="position:absolute;left:94px;top:1249px;width:685px;height:26px;box-sizing:border-box;border:1px solid #dde0e3;background:#e6e9eb"></div><div style="position:absolute;left:98px;top:1255px;height:16px;line-height:16px;font-size:16px;font-weight:700;color:#000;letter-spacing:0px;text-align:left;white-space:pre;"><span style="display:inline-block;transform:scaleX(1.1);transform-origin:left">Запис 3 із 16</span></div><div style="position:absolute;left:14px;top:1278px;width:2122px;height:1px;background:#d0d0d0"></div><div style="position:absolute;left:2136px;top:1013px;width:25px;height:266px;background:#eeeeee"></div><svg style="position:absolute;left:2143px;top:1022px;" width="12" height="9" viewBox="0 0 12 9"><path d="M1 8L6 2.5L11 8" fill="none" stroke="#606060" stroke-width="2.2"/></svg><div style="position:absolute;left:2138px;top:1039px;width:22px;height:94px;background:#cdcdcd"></div><svg style="position:absolute;left:2143px;top:1261px;" width="12" height="9" viewBox="0 0 12 9"><path d="M1 1L6 6.5L11 1" fill="none" stroke="#606060" stroke-width="2.2"/></svg><div style="position:absolute;left:14px;top:1279px;width:2147px;height:25px;background:#eeeeee"></div><svg style="position:absolute;left:21px;top:1286px;" width="9" height="12" viewBox="0 0 9 12"><path d="M7 1L2 6L7 11" fill="none" stroke="#606060" stroke-width="2.2"/></svg><div style="position:absolute;left:39px;top:1281px;width:1866px;height:22px;background:#cdcdcd"></div><svg style="position:absolute;left:2120px;top:1286px;" width="9" height="12" viewBox="0 0 9 12"><path d="M2 1L7 6L2 11" fill="none" stroke="#606060" stroke-width="2.2"/></svg><div style="position:absolute;left:2163px;top:1009px;width:1px;height:299px;background:#d0d0d0"></div><div style="position:absolute;left:8px;top:1307px;width:2159px;height:1px;background:#d0d0d0"></div><div style="position:absolute;left:8px;top:1308px;width:2159px;height:44px;background:#efefef"></div><div style="position:absolute;left:13px;top:1314px;width:187px;height:34px;box-sizing:border-box;border:2px solid #303030;background:#f0f0f0"></div><div style="position:absolute;left:17px;top:1323px;height:16.5px;line-height:16.5px;font-size:16.5px;font-weight:400;color:#1a2a50;letter-spacing:0px;text-align:left;white-space:pre;">Головна</div><div style="position:absolute;left:203px;top:1314px;width:187px;height:34px;box-sizing:border-box;border:2px solid #3b8ee0;background:#ffd4ac"></div><div style="position:absolute;left:207px;top:1323px;height:16.5px;line-height:16.5px;font-size:16.5px;font-weight:400;color:#1a2a50;letter-spacing:0px;text-align:left;white-space:pre;">Націнки</div><div style="position:absolute;left:8px;top:1351px;width:2159px;height:1px;background:#d8d8d8"></div><div style="position:absolute;left:8px;top:1352px;width:2159px;height:26px;background:#ededed"></div><svg style="position:absolute;left:12px;top:1357px;" width="19" height="21" viewBox="0 0 19 21"><defs><linearGradient id="dbg" x1="0" x2="1"><stop offset="0" stop-color="#3a8ae0"/><stop offset="1" stop-color="#1e66c8"/></linearGradient></defs><path d="M1 2Q1 0 3 0H16Q18 0 18 2V18Q18 21 15 21H4Q1 21 1 18Z" fill="#9a8fd8"/><rect x="1" y="5" width="17" height="13" fill="url(#dbg)"/><path d="M4 8H18M4 11.2H18M4 14.4H18" stroke="#e0a070" stroke-width="0.8" opacity="0.7"/><path d="M1.5 8H3M1.5 11.2H3M1.5 14.4H3" stroke="#ffffff" stroke-width="1" opacity="0.8"/><rect x="5" y="2" width="11" height="3" fill="#b0b0c8"/></svg><div style="position:absolute;left:38.5px;top:1358.5px;height:17.5px;line-height:17.5px;font-size:17.5px;font-weight:400;color:#000;letter-spacing:-0.45px;text-align:left;white-space:pre;">База даних: TASA3@TITAN</div><div style="position:absolute;left:305px;top:1354px;width:1px;height:24px;background:#c8c8c8"></div><svg style="position:absolute;left:311px;top:1355px;" width="18" height="23" viewBox="0 0 18 23"><circle cx="6.5" cy="7" r="5.2" fill="#f03a20"/><path d="M2 23Q2 14 9.5 14Q17 14 17 23Z" fill="#8a90e0"/><ellipse cx="10" cy="10.5" rx="5" ry="5.8" fill="#8e96ea"/><path d="M8 14.5L10.5 17L13 14.5Z" fill="#f0a040"/><path d="M4 18Q9.5 21 15 18" stroke="#c8ccf0" stroke-width="1.2" fill="none"/></svg><div style="position:absolute;left:337px;top:1358.5px;height:17.5px;line-height:17.5px;font-size:17.5px;font-weight:400;color:#000;letter-spacing:-0.45px;text-align:left;white-space:pre;">Користувач: GIFT</div><div style="position:absolute;left:611px;top:1354px;width:1px;height:24px;background:#c8c8c8"></div><svg style="position:absolute;left:614px;top:1355px;" width="22" height="23" viewBox="0 0 22 23"><path d="M4 6L8 3H14L21 9V19H3V9Z" fill="#9a9ce0"/><path d="M4 6H14L21 12V19H3Z" fill="#7a7cc8"/><path d="M12 1L15 6" stroke="#333" stroke-width="1.2"/><path d="M6.5 10L3.5 20M12 13L9.5 23" stroke="#222" stroke-width="3"/><path d="M6.5 10L3.5 20M12 13L9.5 23" stroke="#f2d040" stroke-width="1.8"/></svg><div style="position:absolute;left:643px;top:1358.5px;height:17.5px;line-height:17.5px;font-size:17.5px;font-weight:400;color:#000;letter-spacing:0px;text-align:left;white-space:pre;">1</div><div style="position:absolute;left:669px;top:1354px;width:1px;height:24px;background:#c8c8c8"></div><div style="position:absolute;left:674px;top:1358.5px;height:17.5px;line-height:17.5px;font-size:17.5px;font-weight:400;color:#000;letter-spacing:-0.45px;text-align:left;white-space:pre;">Кассовый аппарат не подключен</div><div style="position:absolute;left:1126px;top:1354px;width:1px;height:24px;background:#c8c8c8"></div><div style="position:absolute;left:1130px;top:1358.5px;height:17.5px;line-height:17.5px;font-size:17.5px;font-weight:400;color:#000;letter-spacing:-0.45px;text-align:left;white-space:pre;">Зона: Склад [1]</div><div style="position:absolute;left:0px;top:0px;width:2174px;height:122px;background:rgba(0,0,0,0.29)"></div><div style="position:absolute;left:0px;top:932px;width:2174px;height:446px;background:rgba(0,0,0,0.29)"></div><div style="position:absolute;left:0px;top:122px;width:8px;height:810px;background:rgba(0,0,0,0.29)"></div><div style="position:absolute;left:2167px;top:122px;width:7px;height:810px;background:rgba(0,0,0,0.29)"></div>
</body></html>
